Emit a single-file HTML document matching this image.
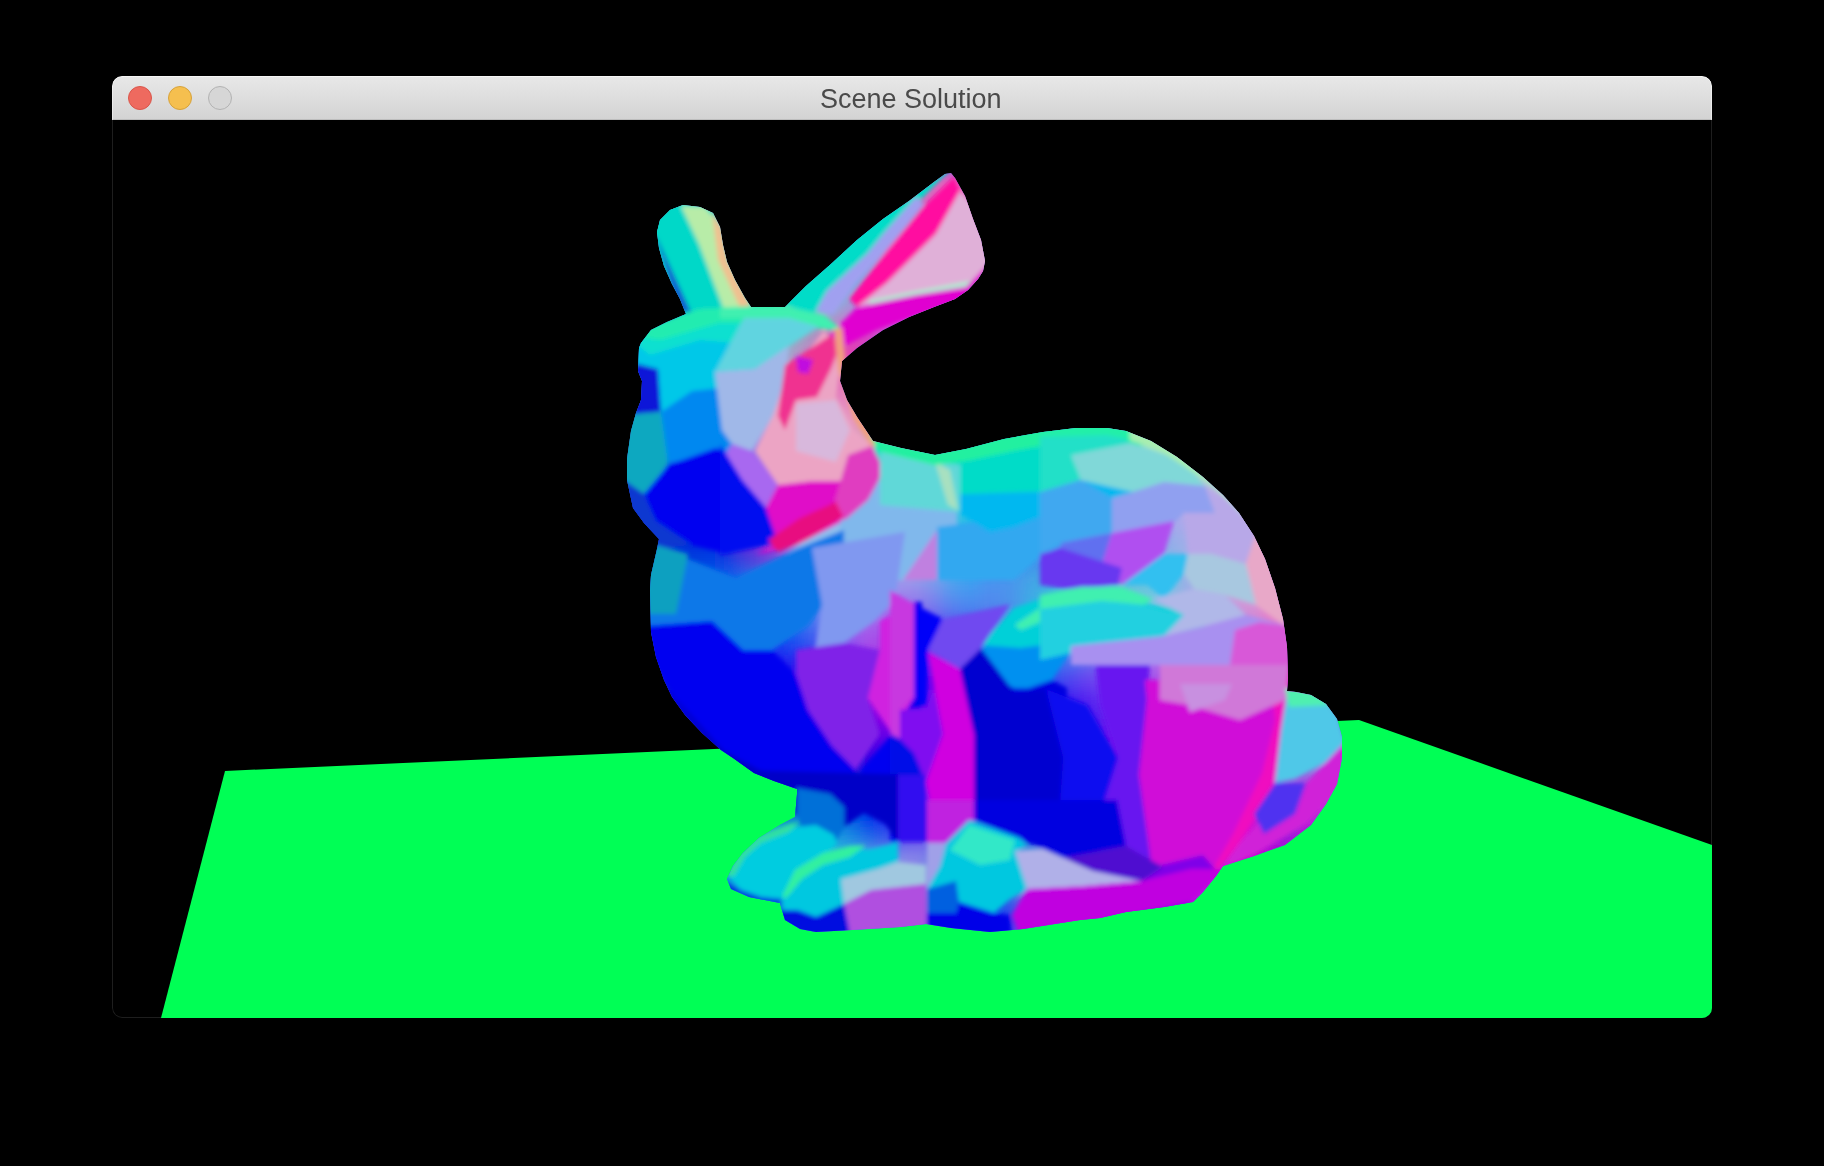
<!DOCTYPE html>
<html><head><meta charset="utf-8">
<style>
html,body{margin:0;padding:0;background:#000;width:1824px;height:1166px;overflow:hidden}
#win{position:absolute;left:112px;top:76px;width:1600px;height:942px;border-radius:10px;overflow:hidden;background:#000}
#title{position:absolute;left:0;top:0;width:1600px;height:44px;background:linear-gradient(#e8e8e8,#d3d3d3);border-radius:10px 10px 0 0;box-shadow:inset 0 1px 0 rgba(255,255,255,.55),inset 1px 0 0 rgba(255,255,255,.45),inset -1px 0 0 rgba(255,255,255,.45),inset 0 -1px 0 #bdbdbd;}
#border{position:absolute;left:0;top:0;width:1600px;height:942px;box-sizing:border-box;border:1px solid #1e1e1e;border-top:none;border-radius:10px;pointer-events:none}
#title .t{position:absolute;left:708px;top:8px;white-space:nowrap;font-family:"Liberation Sans",sans-serif;font-size:27px;color:#4a4a4a;will-change:transform;-webkit-font-smoothing:antialiased}
.dot{position:absolute;top:10px;width:24px;height:24px;border-radius:50%;box-sizing:border-box}
#scene{position:absolute;left:0;top:0}
</style></head><body>
<div id="win">
<div id="border"></div>
<svg id="scene" width="1600" height="942" viewBox="112 76 1600 942">
<polygon fill="#00ff55" points="225,771 1359,720 1712,845 1712,1018 161,1018"/>
<defs><clipPath id="cp"><path d="M657,232 L660,220 L670,210 L683,205 L700,207 L713,213 L720,227 L723,245 L727,262 L735,280 L745,298 L751,307 L785,307 L806,286 L831,264 L857,240 L883,219 L909,201 L934,182 L945,174 L951,173 L955,178 L965,196 L973,219 L981,240 L985,261 L983,271 L978,279 L968,290 L955,299 L934,307 L909,317 L883,330 L857,348 L842,361 L840,381 L847,400 L857,417 L873,441 L901,448 L935,455 L966,449 L1004,439 L1043,432 L1076,428 L1107,428 L1126,431 L1151,441 L1177,457 L1203,477 L1223,495 L1239,513 L1254,536 L1265,559 L1275,588 L1283,619 L1287,647 L1288,678 L1287,691 L1296,692 L1311,695 L1326,704 L1337,719 L1342,737 L1342,758 L1337,784 L1326,804 L1311,825 L1285,845 L1254,856 L1223,866 L1216,876 L1203,892 L1193,902 L1164,907 L1126,912 L1100,918 L1080,920 L1023,929 L990,932 L951,928 L926,924 L900,927 L852,930 L816,932 L800,929 L785,920 L781,907 L780,903 L749,897 L731,889 L727,879 L733,866 L743,853 L759,838 L780,825 L795,817 L797,794 L797,789 L774,781 L754,773 L733,758 L721,750 L702,733 L685,715 L672,697 L664,680 L656,657 L651,632 L650,590 L651,575 L657,549 L659,539 L644,523 L633,508 L627,480 L627,459 L631,431 L636,413 L641,400 L642,381 L638,371 L639,348 L641,343 L651,330 L667,322 L686,314 L680,299 L672,284 L664,266 L659,248 Z"/></clipPath></defs>
<g clip-path="url(#cp)">
<rect x="600" y="160" width="760" height="790" fill="#5a50f0"/>
<defs><filter id="bl" x="600" y="150" width="780" height="820" filterUnits="userSpaceOnUse"><feGaussianBlur stdDeviation="8"/></filter><filter id="bp" x="600" y="150" width="780" height="820" filterUnits="userSpaceOnUse"><feGaussianBlur stdDeviation="2"/></filter></defs>
<g filter="url(#bl)"><rect x="620" y="170" width="20" height="20" fill="#40e0c0"/>
<rect x="640" y="170" width="20" height="20" fill="#40e0c0"/>
<rect x="660" y="170" width="20" height="20" fill="#40e0c0"/>
<rect x="680" y="170" width="20" height="20" fill="#5ee0bc"/>
<rect x="700" y="170" width="20" height="20" fill="#9ae0b4"/>
<rect x="720" y="170" width="20" height="20" fill="#b8e0b0"/>
<rect x="740" y="170" width="20" height="20" fill="#b8e0b0"/>
<rect x="760" y="170" width="20" height="20" fill="#b8e0b0"/>
<rect x="780" y="170" width="20" height="20" fill="#b8e0b0"/>
<rect x="800" y="170" width="20" height="20" fill="#8edeb6"/>
<rect x="820" y="170" width="20" height="20" fill="#3adac2"/>
<rect x="840" y="170" width="20" height="20" fill="#10d8c8"/>
<rect x="860" y="170" width="20" height="20" fill="#10d8c8"/>
<rect x="880" y="170" width="20" height="20" fill="#40bac6"/>
<rect x="900" y="170" width="20" height="20" fill="#a07ec2"/>
<rect x="920" y="170" width="20" height="20" fill="#d860be"/>
<rect x="940" y="170" width="20" height="20" fill="#e860ba"/>
<rect x="960" y="170" width="20" height="20" fill="#f060b8"/>
<rect x="980" y="170" width="20" height="20" fill="#f060b8"/>
<rect x="1000" y="170" width="20" height="20" fill="#f060b8"/>
<rect x="1020" y="170" width="20" height="20" fill="#f060b8"/>
<rect x="1040" y="170" width="20" height="20" fill="#f060b8"/>
<rect x="1060" y="170" width="20" height="20" fill="#f060b8"/>
<rect x="1080" y="170" width="20" height="20" fill="#f060b8"/>
<rect x="1100" y="170" width="20" height="20" fill="#f060b8"/>
<rect x="1120" y="170" width="20" height="20" fill="#f060b8"/>
<rect x="1140" y="170" width="20" height="20" fill="#f060b8"/>
<rect x="1160" y="170" width="20" height="20" fill="#f060b8"/>
<rect x="1180" y="170" width="20" height="20" fill="#f060b8"/>
<rect x="1200" y="170" width="20" height="20" fill="#f060b8"/>
<rect x="1220" y="170" width="20" height="20" fill="#f060b8"/>
<rect x="1240" y="170" width="20" height="20" fill="#de7ebe"/>
<rect x="1260" y="170" width="20" height="20" fill="#babaca"/>
<rect x="1280" y="170" width="20" height="20" fill="#a8d8d0"/>
<rect x="1300" y="170" width="20" height="20" fill="#a8d8d0"/>
<rect x="1320" y="170" width="20" height="20" fill="#a8d8d0"/>
<rect x="620" y="190" width="20" height="20" fill="#40e0c0"/>
<rect x="640" y="190" width="20" height="20" fill="#40e0c0"/>
<rect x="660" y="190" width="20" height="20" fill="#40e0c0"/>
<rect x="680" y="190" width="20" height="20" fill="#5ee0bc"/>
<rect x="700" y="190" width="20" height="20" fill="#9ae0b4"/>
<rect x="720" y="190" width="20" height="20" fill="#b8e0b0"/>
<rect x="740" y="190" width="20" height="20" fill="#b8e0b0"/>
<rect x="760" y="190" width="20" height="20" fill="#acdfb2"/>
<rect x="780" y="190" width="20" height="20" fill="#96ddb8"/>
<rect x="800" y="190" width="20" height="20" fill="#6adabe"/>
<rect x="820" y="190" width="20" height="20" fill="#2cd8c8"/>
<rect x="840" y="190" width="20" height="20" fill="#0dd6cb"/>
<rect x="860" y="190" width="20" height="20" fill="#0fd8c9"/>
<rect x="880" y="190" width="20" height="20" fill="#40bac6"/>
<rect x="900" y="190" width="20" height="20" fill="#a07ec2"/>
<rect x="920" y="190" width="20" height="20" fill="#d862bf"/>
<rect x="940" y="190" width="20" height="20" fill="#e666bd"/>
<rect x="960" y="190" width="20" height="20" fill="#ee68bc"/>
<rect x="980" y="190" width="20" height="20" fill="#ee68bc"/>
<rect x="1000" y="190" width="20" height="20" fill="#ee68bc"/>
<rect x="1020" y="190" width="20" height="20" fill="#ee68bc"/>
<rect x="1040" y="190" width="20" height="20" fill="#ee68bc"/>
<rect x="1060" y="190" width="20" height="20" fill="#ee68bc"/>
<rect x="1080" y="190" width="20" height="20" fill="#ee68bc"/>
<rect x="1100" y="190" width="20" height="20" fill="#ee68bc"/>
<rect x="1120" y="190" width="20" height="20" fill="#ee68bc"/>
<rect x="1140" y="190" width="20" height="20" fill="#ee68bc"/>
<rect x="1160" y="190" width="20" height="20" fill="#ee68bc"/>
<rect x="1180" y="190" width="20" height="20" fill="#ee68bc"/>
<rect x="1200" y="190" width="20" height="20" fill="#ea6ebc"/>
<rect x="1220" y="190" width="20" height="20" fill="#e278be"/>
<rect x="1240" y="190" width="20" height="20" fill="#d094c2"/>
<rect x="1260" y="190" width="20" height="20" fill="#b6c2cc"/>
<rect x="1280" y="190" width="20" height="20" fill="#a8d8d0"/>
<rect x="1300" y="190" width="20" height="20" fill="#a8d8d0"/>
<rect x="1320" y="190" width="20" height="20" fill="#a8d8d0"/>
<rect x="620" y="210" width="20" height="20" fill="#40e0c0"/>
<rect x="640" y="210" width="20" height="20" fill="#40e0c0"/>
<rect x="660" y="210" width="20" height="20" fill="#40e0c0"/>
<rect x="680" y="210" width="20" height="20" fill="#5ee0bc"/>
<rect x="700" y="210" width="20" height="20" fill="#9ae0b4"/>
<rect x="720" y="210" width="20" height="20" fill="#b8e0b0"/>
<rect x="740" y="210" width="20" height="20" fill="#b8e0b0"/>
<rect x="760" y="210" width="20" height="20" fill="#96ddb8"/>
<rect x="780" y="210" width="20" height="20" fill="#50d7c6"/>
<rect x="800" y="210" width="20" height="20" fill="#24d4d0"/>
<rect x="820" y="210" width="20" height="20" fill="#0ed2d2"/>
<rect x="840" y="210" width="20" height="20" fill="#07d4d1"/>
<rect x="860" y="210" width="20" height="20" fill="#0dd6cb"/>
<rect x="880" y="210" width="20" height="20" fill="#40bac6"/>
<rect x="900" y="210" width="20" height="20" fill="#a07ec2"/>
<rect x="920" y="210" width="20" height="20" fill="#d666c1"/>
<rect x="940" y="210" width="20" height="20" fill="#e472c3"/>
<rect x="960" y="210" width="20" height="20" fill="#ea78c4"/>
<rect x="980" y="210" width="20" height="20" fill="#ea78c4"/>
<rect x="1000" y="210" width="20" height="20" fill="#ea78c4"/>
<rect x="1020" y="210" width="20" height="20" fill="#ea78c4"/>
<rect x="1040" y="210" width="20" height="20" fill="#ea78c4"/>
<rect x="1060" y="210" width="20" height="20" fill="#ea78c4"/>
<rect x="1080" y="210" width="20" height="20" fill="#ea78c4"/>
<rect x="1100" y="210" width="20" height="20" fill="#ea78c4"/>
<rect x="1120" y="210" width="20" height="20" fill="#ea78c4"/>
<rect x="1140" y="210" width="20" height="20" fill="#ea78c4"/>
<rect x="1160" y="210" width="20" height="20" fill="#ea78c4"/>
<rect x="1180" y="210" width="20" height="20" fill="#ea78c4"/>
<rect x="1200" y="210" width="20" height="20" fill="#de88c6"/>
<rect x="1220" y="210" width="20" height="20" fill="#c6aac8"/>
<rect x="1240" y="210" width="20" height="20" fill="#b6c2cc"/>
<rect x="1260" y="210" width="20" height="20" fill="#acd0ce"/>
<rect x="1280" y="210" width="20" height="20" fill="#a8d8d0"/>
<rect x="1300" y="210" width="20" height="20" fill="#a8d8d0"/>
<rect x="1320" y="210" width="20" height="20" fill="#a8d8d0"/>
<rect x="620" y="230" width="20" height="20" fill="#34d8c2"/>
<rect x="640" y="230" width="20" height="20" fill="#34d8c2"/>
<rect x="660" y="230" width="20" height="20" fill="#34d8c2"/>
<rect x="680" y="230" width="20" height="20" fill="#54dabd"/>
<rect x="700" y="230" width="20" height="20" fill="#92deb3"/>
<rect x="720" y="230" width="20" height="20" fill="#b2e0ae"/>
<rect x="740" y="230" width="20" height="20" fill="#b2e0ae"/>
<rect x="760" y="230" width="20" height="20" fill="#88deb6"/>
<rect x="780" y="230" width="20" height="20" fill="#36d8c8"/>
<rect x="800" y="230" width="20" height="20" fill="#09d4d2"/>
<rect x="820" y="230" width="20" height="20" fill="#03d2d6"/>
<rect x="840" y="230" width="20" height="20" fill="#0dced6"/>
<rect x="860" y="230" width="20" height="20" fill="#27c8d0"/>
<rect x="880" y="230" width="20" height="20" fill="#5caeca"/>
<rect x="900" y="230" width="20" height="20" fill="#ac7cc4"/>
<rect x="920" y="230" width="20" height="20" fill="#d86ec3"/>
<rect x="940" y="230" width="20" height="20" fill="#de82c9"/>
<rect x="960" y="230" width="20" height="20" fill="#e28ccc"/>
<rect x="980" y="230" width="20" height="20" fill="#e28ccc"/>
<rect x="1000" y="230" width="20" height="20" fill="#e28ccc"/>
<rect x="1020" y="230" width="20" height="20" fill="#e28ccc"/>
<rect x="1040" y="230" width="20" height="20" fill="#e28ccc"/>
<rect x="1060" y="230" width="20" height="20" fill="#e28ccc"/>
<rect x="1080" y="230" width="20" height="20" fill="#e28ccc"/>
<rect x="1100" y="230" width="20" height="20" fill="#e28ccc"/>
<rect x="1120" y="230" width="20" height="20" fill="#e28ccc"/>
<rect x="1140" y="230" width="20" height="20" fill="#e28ccc"/>
<rect x="1160" y="230" width="20" height="20" fill="#e08ecc"/>
<rect x="1180" y="230" width="20" height="20" fill="#da94ca"/>
<rect x="1200" y="230" width="20" height="20" fill="#cca6cc"/>
<rect x="1220" y="230" width="20" height="20" fill="#b4c8ce"/>
<rect x="1240" y="230" width="20" height="20" fill="#a8d8d0"/>
<rect x="1260" y="230" width="20" height="20" fill="#a8d8d0"/>
<rect x="1280" y="230" width="20" height="20" fill="#a8d8d0"/>
<rect x="1300" y="230" width="20" height="20" fill="#a8d8d0"/>
<rect x="1320" y="230" width="20" height="20" fill="#a8d8d0"/>
<rect x="620" y="250" width="20" height="20" fill="#1cc8c6"/>
<rect x="640" y="250" width="20" height="20" fill="#1cc8c6"/>
<rect x="660" y="250" width="20" height="20" fill="#1cc8c6"/>
<rect x="680" y="250" width="20" height="20" fill="#3ecebf"/>
<rect x="700" y="250" width="20" height="20" fill="#84dab1"/>
<rect x="720" y="250" width="20" height="20" fill="#a6e0aa"/>
<rect x="740" y="250" width="20" height="20" fill="#a6e0aa"/>
<rect x="760" y="250" width="20" height="20" fill="#86e0b0"/>
<rect x="780" y="250" width="20" height="20" fill="#44e2ba"/>
<rect x="800" y="250" width="20" height="20" fill="#1bdec6"/>
<rect x="820" y="250" width="20" height="20" fill="#09d4d2"/>
<rect x="840" y="250" width="20" height="20" fill="#1fc4d8"/>
<rect x="860" y="250" width="20" height="20" fill="#5daeda"/>
<rect x="880" y="250" width="20" height="20" fill="#9494d4"/>
<rect x="900" y="250" width="20" height="20" fill="#c47ac6"/>
<rect x="920" y="250" width="20" height="20" fill="#da7ac5"/>
<rect x="940" y="250" width="20" height="20" fill="#d896cf"/>
<rect x="960" y="250" width="20" height="20" fill="#d6a4d4"/>
<rect x="980" y="250" width="20" height="20" fill="#d6a4d4"/>
<rect x="1000" y="250" width="20" height="20" fill="#d6a4d4"/>
<rect x="1020" y="250" width="20" height="20" fill="#d6a4d4"/>
<rect x="1040" y="250" width="20" height="20" fill="#d6a4d4"/>
<rect x="1060" y="250" width="20" height="20" fill="#d6a4d4"/>
<rect x="1080" y="250" width="20" height="20" fill="#d6a4d4"/>
<rect x="1100" y="250" width="20" height="20" fill="#d6a4d4"/>
<rect x="1120" y="250" width="20" height="20" fill="#d6a4d4"/>
<rect x="1140" y="250" width="20" height="20" fill="#d6a4d4"/>
<rect x="1160" y="250" width="20" height="20" fill="#ceacd2"/>
<rect x="1180" y="250" width="20" height="20" fill="#c0bad0"/>
<rect x="1200" y="250" width="20" height="20" fill="#b4c8ce"/>
<rect x="1220" y="250" width="20" height="20" fill="#acd2d0"/>
<rect x="1240" y="250" width="20" height="20" fill="#a8d8d0"/>
<rect x="1260" y="250" width="20" height="20" fill="#a8d8d0"/>
<rect x="1280" y="250" width="20" height="20" fill="#a8d8d0"/>
<rect x="1300" y="250" width="20" height="20" fill="#a8d8d0"/>
<rect x="1320" y="250" width="20" height="20" fill="#a8d8d0"/>
<rect x="620" y="270" width="20" height="20" fill="#10c0c6"/>
<rect x="640" y="270" width="20" height="20" fill="#10bec6"/>
<rect x="660" y="270" width="20" height="20" fill="#10bac6"/>
<rect x="680" y="270" width="20" height="20" fill="#2fc2bf"/>
<rect x="700" y="270" width="20" height="20" fill="#6dd6b1"/>
<rect x="720" y="270" width="20" height="20" fill="#8be1a9"/>
<rect x="740" y="270" width="20" height="20" fill="#89e3a7"/>
<rect x="760" y="270" width="20" height="20" fill="#72e5aa"/>
<rect x="780" y="270" width="20" height="20" fill="#46e7b4"/>
<rect x="800" y="270" width="20" height="20" fill="#2fdfc0"/>
<rect x="820" y="270" width="20" height="20" fill="#2dcdd2"/>
<rect x="840" y="270" width="20" height="20" fill="#4cb5da"/>
<rect x="860" y="270" width="20" height="20" fill="#8c97dc"/>
<rect x="880" y="270" width="20" height="20" fill="#b685d6"/>
<rect x="900" y="270" width="20" height="20" fill="#ca7fcc"/>
<rect x="920" y="270" width="20" height="20" fill="#d383ca"/>
<rect x="940" y="270" width="20" height="20" fill="#d191d2"/>
<rect x="960" y="270" width="20" height="20" fill="#d098d6"/>
<rect x="980" y="270" width="20" height="20" fill="#d098d6"/>
<rect x="1000" y="270" width="20" height="20" fill="#d098d6"/>
<rect x="1020" y="270" width="20" height="20" fill="#d098d6"/>
<rect x="1040" y="270" width="20" height="20" fill="#d098d6"/>
<rect x="1060" y="270" width="20" height="20" fill="#d098d6"/>
<rect x="1080" y="270" width="20" height="20" fill="#d098d6"/>
<rect x="1100" y="270" width="20" height="20" fill="#d098d6"/>
<rect x="1120" y="270" width="20" height="20" fill="#cea1d6"/>
<rect x="1140" y="270" width="20" height="20" fill="#c8b3d4"/>
<rect x="1160" y="270" width="20" height="20" fill="#bec3d3"/>
<rect x="1180" y="270" width="20" height="20" fill="#b0d1d1"/>
<rect x="1200" y="270" width="20" height="20" fill="#a8d8d0"/>
<rect x="1220" y="270" width="20" height="20" fill="#a8d8d0"/>
<rect x="1240" y="270" width="20" height="20" fill="#a8d8d0"/>
<rect x="1260" y="270" width="20" height="20" fill="#a8d8d0"/>
<rect x="1280" y="270" width="20" height="20" fill="#a8d8d0"/>
<rect x="1300" y="270" width="20" height="20" fill="#a8d8d0"/>
<rect x="1320" y="270" width="20" height="20" fill="#a8d8d0"/>
<rect x="620" y="290" width="20" height="20" fill="#10c0c2"/>
<rect x="640" y="290" width="20" height="20" fill="#10bac2"/>
<rect x="660" y="290" width="20" height="20" fill="#10aec2"/>
<rect x="680" y="290" width="20" height="20" fill="#25b6bd"/>
<rect x="700" y="290" width="20" height="20" fill="#4fd2b3"/>
<rect x="720" y="290" width="20" height="20" fill="#61e3ab"/>
<rect x="740" y="290" width="20" height="20" fill="#5be9a5"/>
<rect x="760" y="290" width="20" height="20" fill="#4eeba8"/>
<rect x="780" y="290" width="20" height="20" fill="#3ae9b2"/>
<rect x="800" y="290" width="20" height="20" fill="#45d9c2"/>
<rect x="820" y="290" width="20" height="20" fill="#6fbbd4"/>
<rect x="840" y="290" width="20" height="20" fill="#949fdc"/>
<rect x="860" y="290" width="20" height="20" fill="#b485d6"/>
<rect x="880" y="290" width="20" height="20" fill="#c27fd4"/>
<rect x="900" y="290" width="20" height="20" fill="#be8dd2"/>
<rect x="920" y="290" width="20" height="20" fill="#c189d2"/>
<rect x="940" y="290" width="20" height="20" fill="#cb73d2"/>
<rect x="960" y="290" width="20" height="20" fill="#d068d2"/>
<rect x="980" y="290" width="20" height="20" fill="#d068d2"/>
<rect x="1000" y="290" width="20" height="20" fill="#d068d2"/>
<rect x="1020" y="290" width="20" height="20" fill="#d068d2"/>
<rect x="1040" y="290" width="20" height="20" fill="#d068d2"/>
<rect x="1060" y="290" width="20" height="20" fill="#d068d2"/>
<rect x="1080" y="290" width="20" height="20" fill="#d068d2"/>
<rect x="1100" y="290" width="20" height="20" fill="#d068d2"/>
<rect x="1120" y="290" width="20" height="20" fill="#c883d0"/>
<rect x="1140" y="290" width="20" height="20" fill="#bab9ce"/>
<rect x="1160" y="290" width="20" height="20" fill="#b0d5cd"/>
<rect x="1180" y="290" width="20" height="20" fill="#aad7cf"/>
<rect x="1200" y="290" width="20" height="20" fill="#a8d8d0"/>
<rect x="1220" y="290" width="20" height="20" fill="#a8d8d0"/>
<rect x="1240" y="290" width="20" height="20" fill="#a8d8d0"/>
<rect x="1260" y="290" width="20" height="20" fill="#a8d8d0"/>
<rect x="1280" y="290" width="20" height="20" fill="#a8d8d0"/>
<rect x="1300" y="290" width="20" height="20" fill="#a8d8d0"/>
<rect x="1320" y="290" width="20" height="20" fill="#a8d8d0"/>
<rect x="620" y="310" width="20" height="20" fill="#10c0c0"/>
<rect x="640" y="310" width="20" height="20" fill="#10bbc1"/>
<rect x="660" y="310" width="20" height="20" fill="#10b1c3"/>
<rect x="680" y="310" width="20" height="20" fill="#1cb8c2"/>
<rect x="700" y="310" width="20" height="20" fill="#34d0bc"/>
<rect x="720" y="310" width="20" height="20" fill="#40e0b6"/>
<rect x="740" y="310" width="20" height="20" fill="#40e6b0"/>
<rect x="760" y="310" width="20" height="20" fill="#45e4b0"/>
<rect x="780" y="310" width="20" height="20" fill="#4fd8ba"/>
<rect x="800" y="310" width="20" height="20" fill="#6fbec2"/>
<rect x="820" y="310" width="20" height="20" fill="#a598cc"/>
<rect x="840" y="310" width="20" height="20" fill="#c47ad0"/>
<rect x="860" y="310" width="20" height="20" fill="#cc66ce"/>
<rect x="880" y="310" width="20" height="20" fill="#ca65d0"/>
<rect x="900" y="310" width="20" height="20" fill="#be77d2"/>
<rect x="920" y="310" width="20" height="20" fill="#be74d3"/>
<rect x="940" y="310" width="20" height="20" fill="#ca5cd1"/>
<rect x="960" y="310" width="20" height="20" fill="#d050d0"/>
<rect x="980" y="310" width="20" height="20" fill="#d050d0"/>
<rect x="1000" y="310" width="20" height="20" fill="#d050d0"/>
<rect x="1020" y="310" width="20" height="20" fill="#d050d0"/>
<rect x="1040" y="310" width="20" height="20" fill="#c759d0"/>
<rect x="1060" y="310" width="20" height="20" fill="#b56bd0"/>
<rect x="1080" y="310" width="20" height="20" fill="#b074d0"/>
<rect x="1100" y="310" width="20" height="20" fill="#b872d2"/>
<rect x="1120" y="310" width="20" height="20" fill="#b78ed0"/>
<rect x="1140" y="310" width="20" height="20" fill="#adc4ca"/>
<rect x="1160" y="310" width="20" height="20" fill="#a8deca"/>
<rect x="1180" y="310" width="20" height="20" fill="#a8dace"/>
<rect x="1200" y="310" width="20" height="20" fill="#a8d8d0"/>
<rect x="1220" y="310" width="20" height="20" fill="#a8d8d0"/>
<rect x="1240" y="310" width="20" height="20" fill="#a8d8d0"/>
<rect x="1260" y="310" width="20" height="20" fill="#a8d8d0"/>
<rect x="1280" y="310" width="20" height="20" fill="#a8d8d0"/>
<rect x="1300" y="310" width="20" height="20" fill="#a8d8d0"/>
<rect x="1320" y="310" width="20" height="20" fill="#a8d8d0"/>
<rect x="620" y="330" width="20" height="20" fill="#10c0c0"/>
<rect x="640" y="330" width="20" height="20" fill="#10c1c3"/>
<rect x="660" y="330" width="20" height="20" fill="#10c3c9"/>
<rect x="680" y="330" width="20" height="20" fill="#14c8cc"/>
<rect x="700" y="330" width="20" height="20" fill="#1cd0ce"/>
<rect x="720" y="330" width="20" height="20" fill="#28d6cc"/>
<rect x="740" y="330" width="20" height="20" fill="#38dcc6"/>
<rect x="760" y="330" width="20" height="20" fill="#57d0c6"/>
<rect x="780" y="330" width="20" height="20" fill="#85b4c8"/>
<rect x="800" y="330" width="20" height="20" fill="#ad90c4"/>
<rect x="820" y="330" width="20" height="20" fill="#cf62b6"/>
<rect x="840" y="330" width="20" height="20" fill="#dc46b6"/>
<rect x="860" y="330" width="20" height="20" fill="#d43ac4"/>
<rect x="880" y="330" width="20" height="20" fill="#ce37ca"/>
<rect x="900" y="330" width="20" height="20" fill="#ca3dcc"/>
<rect x="920" y="330" width="20" height="20" fill="#ca44cd"/>
<rect x="940" y="330" width="20" height="20" fill="#ce4ccf"/>
<rect x="960" y="330" width="20" height="20" fill="#d050d0"/>
<rect x="980" y="330" width="20" height="20" fill="#d050d0"/>
<rect x="1000" y="330" width="20" height="20" fill="#d050d0"/>
<rect x="1020" y="330" width="20" height="20" fill="#d050d0"/>
<rect x="1040" y="330" width="20" height="20" fill="#b56bd0"/>
<rect x="1060" y="330" width="20" height="20" fill="#7fa1d0"/>
<rect x="1080" y="330" width="20" height="20" fill="#70bad2"/>
<rect x="1100" y="330" width="20" height="20" fill="#88b8d4"/>
<rect x="1120" y="330" width="20" height="20" fill="#99c0d2"/>
<rect x="1140" y="330" width="20" height="20" fill="#a3d6cc"/>
<rect x="1160" y="330" width="20" height="20" fill="#a8deca"/>
<rect x="1180" y="330" width="20" height="20" fill="#a8dace"/>
<rect x="1200" y="330" width="20" height="20" fill="#a8d8d0"/>
<rect x="1220" y="330" width="20" height="20" fill="#a8d8d0"/>
<rect x="1240" y="330" width="20" height="20" fill="#a8d8d0"/>
<rect x="1260" y="330" width="20" height="20" fill="#a8d8d0"/>
<rect x="1280" y="330" width="20" height="20" fill="#a8d8d0"/>
<rect x="1300" y="330" width="20" height="20" fill="#a8d8d0"/>
<rect x="1320" y="330" width="20" height="20" fill="#a8d8d0"/>
<rect x="620" y="350" width="20" height="20" fill="#0e98c4"/>
<rect x="640" y="350" width="20" height="20" fill="#0ea3c8"/>
<rect x="660" y="350" width="20" height="20" fill="#0cb9d0"/>
<rect x="680" y="350" width="20" height="20" fill="#0cc6d6"/>
<rect x="700" y="350" width="20" height="20" fill="#0ccada"/>
<rect x="720" y="350" width="20" height="20" fill="#1fceda"/>
<rect x="740" y="350" width="20" height="20" fill="#45d0d8"/>
<rect x="760" y="350" width="20" height="20" fill="#75bed2"/>
<rect x="780" y="350" width="20" height="20" fill="#af98cc"/>
<rect x="800" y="350" width="20" height="20" fill="#d474c0"/>
<rect x="820" y="350" width="20" height="20" fill="#e454b0"/>
<rect x="840" y="350" width="20" height="20" fill="#e641b0"/>
<rect x="860" y="350" width="20" height="20" fill="#da3bbe"/>
<rect x="880" y="350" width="20" height="20" fill="#d332c6"/>
<rect x="900" y="350" width="20" height="20" fill="#d126c8"/>
<rect x="920" y="350" width="20" height="20" fill="#d02cca"/>
<rect x="940" y="350" width="20" height="20" fill="#d044ce"/>
<rect x="960" y="350" width="20" height="20" fill="#c45acf"/>
<rect x="980" y="350" width="20" height="20" fill="#ac6ccd"/>
<rect x="1000" y="350" width="20" height="20" fill="#a076cc"/>
<rect x="1020" y="350" width="20" height="20" fill="#a076cc"/>
<rect x="1040" y="350" width="20" height="20" fill="#8890cd"/>
<rect x="1060" y="350" width="20" height="20" fill="#58c6cf"/>
<rect x="1080" y="350" width="20" height="20" fill="#50ded2"/>
<rect x="1100" y="350" width="20" height="20" fill="#70dad6"/>
<rect x="1120" y="350" width="20" height="20" fill="#8adad4"/>
<rect x="1140" y="350" width="20" height="20" fill="#9edecc"/>
<rect x="1160" y="350" width="20" height="20" fill="#a8deca"/>
<rect x="1180" y="350" width="20" height="20" fill="#a8dace"/>
<rect x="1200" y="350" width="20" height="20" fill="#a8d8d0"/>
<rect x="1220" y="350" width="20" height="20" fill="#a8d8d0"/>
<rect x="1240" y="350" width="20" height="20" fill="#a8d8d0"/>
<rect x="1260" y="350" width="20" height="20" fill="#a8d8d0"/>
<rect x="1280" y="350" width="20" height="20" fill="#a8d8d0"/>
<rect x="1300" y="350" width="20" height="20" fill="#a8d8d0"/>
<rect x="1320" y="350" width="20" height="20" fill="#a8d8d0"/>
<rect x="620" y="370" width="20" height="20" fill="#0a48cc"/>
<rect x="640" y="370" width="20" height="20" fill="#0861d0"/>
<rect x="660" y="370" width="20" height="20" fill="#0693d8"/>
<rect x="680" y="370" width="20" height="20" fill="#04b2de"/>
<rect x="700" y="370" width="20" height="20" fill="#04bee2"/>
<rect x="720" y="370" width="20" height="20" fill="#25c4e4"/>
<rect x="740" y="370" width="20" height="20" fill="#67c6e2"/>
<rect x="760" y="370" width="20" height="20" fill="#9fb0d8"/>
<rect x="780" y="370" width="20" height="20" fill="#cd82c2"/>
<rect x="800" y="370" width="20" height="20" fill="#e46cb8"/>
<rect x="820" y="370" width="20" height="20" fill="#e46cb8"/>
<rect x="840" y="370" width="20" height="20" fill="#e26bba"/>
<rect x="860" y="370" width="20" height="20" fill="#de69c0"/>
<rect x="880" y="370" width="20" height="20" fill="#d956c4"/>
<rect x="900" y="370" width="20" height="20" fill="#d332c6"/>
<rect x="920" y="370" width="20" height="20" fill="#d02cca"/>
<rect x="940" y="370" width="20" height="20" fill="#d044ce"/>
<rect x="960" y="370" width="20" height="20" fill="#ac6ccd"/>
<rect x="980" y="370" width="20" height="20" fill="#64a6c7"/>
<rect x="1000" y="370" width="20" height="20" fill="#40c2c4"/>
<rect x="1020" y="370" width="20" height="20" fill="#40c2c4"/>
<rect x="1040" y="370" width="20" height="20" fill="#40cac7"/>
<rect x="1060" y="370" width="20" height="20" fill="#40d8cd"/>
<rect x="1080" y="370" width="20" height="20" fill="#50ded2"/>
<rect x="1100" y="370" width="20" height="20" fill="#70dad6"/>
<rect x="1120" y="370" width="20" height="20" fill="#8adad4"/>
<rect x="1140" y="370" width="20" height="20" fill="#9edecc"/>
<rect x="1160" y="370" width="20" height="20" fill="#a8deca"/>
<rect x="1180" y="370" width="20" height="20" fill="#a8dace"/>
<rect x="1200" y="370" width="20" height="20" fill="#a8d8d0"/>
<rect x="1220" y="370" width="20" height="20" fill="#a8d8d0"/>
<rect x="1240" y="370" width="20" height="20" fill="#a8d8d0"/>
<rect x="1260" y="370" width="20" height="20" fill="#a8d8d0"/>
<rect x="1280" y="370" width="20" height="20" fill="#a8d8d0"/>
<rect x="1300" y="370" width="20" height="20" fill="#a8d8d0"/>
<rect x="1320" y="370" width="20" height="20" fill="#a8d8d0"/>
<rect x="620" y="390" width="20" height="20" fill="#0a40ca"/>
<rect x="640" y="390" width="20" height="20" fill="#0856d0"/>
<rect x="660" y="390" width="20" height="20" fill="#0284da"/>
<rect x="680" y="390" width="20" height="20" fill="#01a1e2"/>
<rect x="700" y="390" width="20" height="20" fill="#03afe6"/>
<rect x="720" y="390" width="20" height="20" fill="#2db6e8"/>
<rect x="740" y="390" width="20" height="20" fill="#7fb4e6"/>
<rect x="760" y="390" width="20" height="20" fill="#baa2da"/>
<rect x="780" y="390" width="20" height="20" fill="#dc80c0"/>
<rect x="800" y="390" width="20" height="20" fill="#eb74b7"/>
<rect x="820" y="390" width="20" height="20" fill="#e582bd"/>
<rect x="840" y="390" width="20" height="20" fill="#e288c0"/>
<rect x="860" y="390" width="20" height="20" fill="#e288c0"/>
<rect x="880" y="390" width="20" height="20" fill="#d67ac2"/>
<rect x="900" y="390" width="20" height="20" fill="#c05ec4"/>
<rect x="920" y="390" width="20" height="20" fill="#b05ac7"/>
<rect x="940" y="390" width="20" height="20" fill="#a86cc9"/>
<rect x="960" y="390" width="20" height="20" fill="#7f92c8"/>
<rect x="980" y="390" width="20" height="20" fill="#35ccc2"/>
<rect x="1000" y="390" width="20" height="20" fill="#10e8c0"/>
<rect x="1020" y="390" width="20" height="20" fill="#10e8c0"/>
<rect x="1040" y="390" width="20" height="20" fill="#1ce6c4"/>
<rect x="1060" y="390" width="20" height="20" fill="#34e2cc"/>
<rect x="1080" y="390" width="20" height="20" fill="#50ded2"/>
<rect x="1100" y="390" width="20" height="20" fill="#70dad6"/>
<rect x="1120" y="390" width="20" height="20" fill="#8adad4"/>
<rect x="1140" y="390" width="20" height="20" fill="#9edecc"/>
<rect x="1160" y="390" width="20" height="20" fill="#a8deca"/>
<rect x="1180" y="390" width="20" height="20" fill="#a8dace"/>
<rect x="1200" y="390" width="20" height="20" fill="#a8d8d0"/>
<rect x="1220" y="390" width="20" height="20" fill="#a8d8d0"/>
<rect x="1240" y="390" width="20" height="20" fill="#a8d8d0"/>
<rect x="1260" y="390" width="20" height="20" fill="#a8d8d0"/>
<rect x="1280" y="390" width="20" height="20" fill="#aad6d0"/>
<rect x="1300" y="390" width="20" height="20" fill="#b0d0d2"/>
<rect x="1320" y="390" width="20" height="20" fill="#b2ced2"/>
<rect x="620" y="410" width="20" height="20" fill="#0e80be"/>
<rect x="640" y="410" width="20" height="20" fill="#0a84c6"/>
<rect x="660" y="410" width="20" height="20" fill="#048ad8"/>
<rect x="680" y="410" width="20" height="20" fill="#0393e2"/>
<rect x="700" y="410" width="20" height="20" fill="#099de6"/>
<rect x="720" y="410" width="20" height="20" fill="#37a0e6"/>
<rect x="740" y="410" width="20" height="20" fill="#8d9ee4"/>
<rect x="760" y="410" width="20" height="20" fill="#c498d8"/>
<rect x="780" y="410" width="20" height="20" fill="#de8ec6"/>
<rect x="800" y="410" width="20" height="20" fill="#e98ebd"/>
<rect x="820" y="410" width="20" height="20" fill="#e794bf"/>
<rect x="840" y="410" width="20" height="20" fill="#e698c0"/>
<rect x="860" y="410" width="20" height="20" fill="#e698c0"/>
<rect x="880" y="410" width="20" height="20" fill="#cc9ec0"/>
<rect x="900" y="410" width="20" height="20" fill="#96aac2"/>
<rect x="920" y="410" width="20" height="20" fill="#70b4c1"/>
<rect x="940" y="410" width="20" height="20" fill="#58bebf"/>
<rect x="960" y="410" width="20" height="20" fill="#3dccbe"/>
<rect x="980" y="410" width="20" height="20" fill="#1fdec0"/>
<rect x="1000" y="410" width="20" height="20" fill="#10e8c0"/>
<rect x="1020" y="410" width="20" height="20" fill="#10e8c0"/>
<rect x="1040" y="410" width="20" height="20" fill="#1ce6c4"/>
<rect x="1060" y="410" width="20" height="20" fill="#34e2cc"/>
<rect x="1080" y="410" width="20" height="20" fill="#50ded2"/>
<rect x="1100" y="410" width="20" height="20" fill="#70dad6"/>
<rect x="1120" y="410" width="20" height="20" fill="#8adad4"/>
<rect x="1140" y="410" width="20" height="20" fill="#9edecc"/>
<rect x="1160" y="410" width="20" height="20" fill="#a8deca"/>
<rect x="1180" y="410" width="20" height="20" fill="#a8dace"/>
<rect x="1200" y="410" width="20" height="20" fill="#a8d8d0"/>
<rect x="1220" y="410" width="20" height="20" fill="#a8d8d0"/>
<rect x="1240" y="410" width="20" height="20" fill="#a8d8d0"/>
<rect x="1260" y="410" width="20" height="20" fill="#a8d8d0"/>
<rect x="1280" y="410" width="20" height="20" fill="#b0d0d2"/>
<rect x="1300" y="410" width="20" height="20" fill="#bec2d4"/>
<rect x="1320" y="410" width="20" height="20" fill="#c6bad6"/>
<rect x="620" y="430" width="20" height="20" fill="#1094be"/>
<rect x="640" y="430" width="20" height="20" fill="#0c8cc8"/>
<rect x="660" y="430" width="20" height="20" fill="#067eda"/>
<rect x="680" y="430" width="20" height="20" fill="#0676e6"/>
<rect x="700" y="430" width="20" height="20" fill="#1076e8"/>
<rect x="720" y="430" width="20" height="20" fill="#3d7ae8"/>
<rect x="740" y="430" width="20" height="20" fill="#8f84e6"/>
<rect x="760" y="430" width="20" height="20" fill="#c48ada"/>
<rect x="780" y="430" width="20" height="20" fill="#de90c6"/>
<rect x="800" y="430" width="20" height="20" fill="#ea90bc"/>
<rect x="820" y="430" width="20" height="20" fill="#ea8ebe"/>
<rect x="840" y="430" width="20" height="20" fill="#e095be"/>
<rect x="860" y="430" width="20" height="20" fill="#cca7c0"/>
<rect x="880" y="430" width="20" height="20" fill="#aabcc0"/>
<rect x="900" y="430" width="20" height="20" fill="#78d4c0"/>
<rect x="920" y="430" width="20" height="20" fill="#50e2be"/>
<rect x="940" y="430" width="20" height="20" fill="#30e6ba"/>
<rect x="960" y="430" width="20" height="20" fill="#1ce8ba"/>
<rect x="980" y="430" width="20" height="20" fill="#14e8be"/>
<rect x="1000" y="430" width="20" height="20" fill="#10e8c0"/>
<rect x="1020" y="430" width="20" height="20" fill="#10e8c0"/>
<rect x="1040" y="430" width="20" height="20" fill="#1ce6c4"/>
<rect x="1060" y="430" width="20" height="20" fill="#34e2cc"/>
<rect x="1080" y="430" width="20" height="20" fill="#50ded2"/>
<rect x="1100" y="430" width="20" height="20" fill="#70dad6"/>
<rect x="1120" y="430" width="20" height="20" fill="#8adad4"/>
<rect x="1140" y="430" width="20" height="20" fill="#9edecc"/>
<rect x="1160" y="430" width="20" height="20" fill="#a8deca"/>
<rect x="1180" y="430" width="20" height="20" fill="#a8dace"/>
<rect x="1200" y="430" width="20" height="20" fill="#a8d8d0"/>
<rect x="1220" y="430" width="20" height="20" fill="#a8d8d0"/>
<rect x="1240" y="430" width="20" height="20" fill="#aad6d0"/>
<rect x="1260" y="430" width="20" height="20" fill="#b0d0d2"/>
<rect x="1280" y="430" width="20" height="20" fill="#bac6d4"/>
<rect x="1300" y="430" width="20" height="20" fill="#c8b8d6"/>
<rect x="1320" y="430" width="20" height="20" fill="#d0b0d8"/>
<rect x="620" y="450" width="20" height="20" fill="#107cca"/>
<rect x="640" y="450" width="20" height="20" fill="#0e72d2"/>
<rect x="660" y="450" width="20" height="20" fill="#085ce4"/>
<rect x="680" y="450" width="20" height="20" fill="#0c4aec"/>
<rect x="700" y="450" width="20" height="20" fill="#163aee"/>
<rect x="720" y="450" width="20" height="20" fill="#3f44ee"/>
<rect x="740" y="450" width="20" height="20" fill="#8566ec"/>
<rect x="760" y="450" width="20" height="20" fill="#ba7cde"/>
<rect x="780" y="450" width="20" height="20" fill="#dc82c2"/>
<rect x="800" y="450" width="20" height="20" fill="#ee7eb6"/>
<rect x="820" y="450" width="20" height="20" fill="#ee6cb8"/>
<rect x="840" y="450" width="20" height="20" fill="#d07fbc"/>
<rect x="860" y="450" width="20" height="20" fill="#94b5be"/>
<rect x="880" y="450" width="20" height="20" fill="#70d4c0"/>
<rect x="900" y="450" width="20" height="20" fill="#66dcc0"/>
<rect x="920" y="450" width="20" height="20" fill="#50e2be"/>
<rect x="940" y="450" width="20" height="20" fill="#30e6ba"/>
<rect x="960" y="450" width="20" height="20" fill="#1ce8ba"/>
<rect x="980" y="450" width="20" height="20" fill="#14e8be"/>
<rect x="1000" y="450" width="20" height="20" fill="#10e8c0"/>
<rect x="1020" y="450" width="20" height="20" fill="#10e8c0"/>
<rect x="1040" y="450" width="20" height="20" fill="#1ce6c4"/>
<rect x="1060" y="450" width="20" height="20" fill="#34e2cc"/>
<rect x="1080" y="450" width="20" height="20" fill="#50ded2"/>
<rect x="1100" y="450" width="20" height="20" fill="#70dad6"/>
<rect x="1120" y="450" width="20" height="20" fill="#8adad4"/>
<rect x="1140" y="450" width="20" height="20" fill="#9edecc"/>
<rect x="1160" y="450" width="20" height="20" fill="#a8deca"/>
<rect x="1180" y="450" width="20" height="20" fill="#a8dace"/>
<rect x="1200" y="450" width="20" height="20" fill="#a8d8d0"/>
<rect x="1220" y="450" width="20" height="20" fill="#a8d8d0"/>
<rect x="1240" y="450" width="20" height="20" fill="#b0d0d2"/>
<rect x="1260" y="450" width="20" height="20" fill="#bec2d4"/>
<rect x="1280" y="450" width="20" height="20" fill="#c8b8d6"/>
<rect x="1300" y="450" width="20" height="20" fill="#ceb2d8"/>
<rect x="1320" y="450" width="20" height="20" fill="#d0b0d8"/>
<rect x="620" y="470" width="20" height="20" fill="#0c5cd0"/>
<rect x="640" y="470" width="20" height="20" fill="#0a51d8"/>
<rect x="660" y="470" width="20" height="20" fill="#083be8"/>
<rect x="680" y="470" width="20" height="20" fill="#0c27f0"/>
<rect x="700" y="470" width="20" height="20" fill="#1a15f0"/>
<rect x="720" y="470" width="20" height="20" fill="#401ff0"/>
<rect x="740" y="470" width="20" height="20" fill="#8045f0"/>
<rect x="760" y="470" width="20" height="20" fill="#b45ce0"/>
<rect x="780" y="470" width="20" height="20" fill="#da62c0"/>
<rect x="800" y="470" width="20" height="20" fill="#ec60b4"/>
<rect x="820" y="470" width="20" height="20" fill="#e652ba"/>
<rect x="840" y="470" width="20" height="20" fill="#bf70c0"/>
<rect x="860" y="470" width="20" height="20" fill="#75b8c6"/>
<rect x="880" y="470" width="20" height="20" fill="#56dcc8"/>
<rect x="900" y="470" width="20" height="20" fill="#62daca"/>
<rect x="920" y="470" width="20" height="20" fill="#57dcc8"/>
<rect x="940" y="470" width="20" height="20" fill="#35dec4"/>
<rect x="960" y="470" width="20" height="20" fill="#1edfc4"/>
<rect x="980" y="470" width="20" height="20" fill="#12ddca"/>
<rect x="1000" y="470" width="20" height="20" fill="#0ddccc"/>
<rect x="1020" y="470" width="20" height="20" fill="#0fdccc"/>
<rect x="1040" y="470" width="20" height="20" fill="#1edacf"/>
<rect x="1060" y="470" width="20" height="20" fill="#3ad6d5"/>
<rect x="1080" y="470" width="20" height="20" fill="#57d2d9"/>
<rect x="1100" y="470" width="20" height="20" fill="#75d0db"/>
<rect x="1120" y="470" width="20" height="20" fill="#8eceda"/>
<rect x="1140" y="470" width="20" height="20" fill="#a0d0d4"/>
<rect x="1160" y="470" width="20" height="20" fill="#aacfd3"/>
<rect x="1180" y="470" width="20" height="20" fill="#accdd5"/>
<rect x="1200" y="470" width="20" height="20" fill="#aeccd5"/>
<rect x="1220" y="470" width="20" height="20" fill="#b0ced3"/>
<rect x="1240" y="470" width="20" height="20" fill="#bac6d4"/>
<rect x="1260" y="470" width="20" height="20" fill="#c8b8d6"/>
<rect x="1280" y="470" width="20" height="20" fill="#d2afd6"/>
<rect x="1300" y="470" width="20" height="20" fill="#d4add4"/>
<rect x="1320" y="470" width="20" height="20" fill="#d6acd2"/>
<rect x="620" y="490" width="20" height="20" fill="#0434d0"/>
<rect x="640" y="490" width="20" height="20" fill="#042bd8"/>
<rect x="660" y="490" width="20" height="20" fill="#0219e8"/>
<rect x="680" y="490" width="20" height="20" fill="#0a0df0"/>
<rect x="700" y="490" width="20" height="20" fill="#1807f0"/>
<rect x="720" y="490" width="20" height="20" fill="#400df0"/>
<rect x="740" y="490" width="20" height="20" fill="#801ff0"/>
<rect x="760" y="490" width="20" height="20" fill="#b22ae0"/>
<rect x="780" y="490" width="20" height="20" fill="#d830c0"/>
<rect x="800" y="490" width="20" height="20" fill="#e236b6"/>
<rect x="820" y="490" width="20" height="20" fill="#d440c4"/>
<rect x="840" y="490" width="20" height="20" fill="#ad68ce"/>
<rect x="860" y="490" width="20" height="20" fill="#6fb0d4"/>
<rect x="880" y="490" width="20" height="20" fill="#5ad2da"/>
<rect x="900" y="490" width="20" height="20" fill="#6ed0dc"/>
<rect x="920" y="490" width="20" height="20" fill="#65cedc"/>
<rect x="940" y="490" width="20" height="20" fill="#3fd0d8"/>
<rect x="960" y="490" width="20" height="20" fill="#22cdda"/>
<rect x="980" y="490" width="20" height="20" fill="#0ec7e0"/>
<rect x="1000" y="490" width="20" height="20" fill="#07c4e4"/>
<rect x="1020" y="490" width="20" height="20" fill="#0dc4e4"/>
<rect x="1040" y="490" width="20" height="20" fill="#22c2e5"/>
<rect x="1060" y="490" width="20" height="20" fill="#46bee7"/>
<rect x="1080" y="490" width="20" height="20" fill="#65bce7"/>
<rect x="1100" y="490" width="20" height="20" fill="#7fbae5"/>
<rect x="1120" y="490" width="20" height="20" fill="#94b8e4"/>
<rect x="1140" y="490" width="20" height="20" fill="#a6b2e6"/>
<rect x="1160" y="490" width="20" height="20" fill="#b0b1e5"/>
<rect x="1180" y="490" width="20" height="20" fill="#b2b3e3"/>
<rect x="1200" y="490" width="20" height="20" fill="#b8b6df"/>
<rect x="1220" y="490" width="20" height="20" fill="#c2b8d9"/>
<rect x="1240" y="490" width="20" height="20" fill="#c8b8d6"/>
<rect x="1260" y="490" width="20" height="20" fill="#ceb2d8"/>
<rect x="1280" y="490" width="20" height="20" fill="#d4add4"/>
<rect x="1300" y="490" width="20" height="20" fill="#dea7ca"/>
<rect x="1320" y="490" width="20" height="20" fill="#e2a4c6"/>
<rect x="620" y="510" width="20" height="20" fill="#002cce"/>
<rect x="640" y="510" width="20" height="20" fill="#0024d5"/>
<rect x="660" y="510" width="20" height="20" fill="#0014e3"/>
<rect x="680" y="510" width="20" height="20" fill="#060cea"/>
<rect x="700" y="510" width="20" height="20" fill="#120cec"/>
<rect x="720" y="510" width="20" height="20" fill="#380eeb"/>
<rect x="740" y="510" width="20" height="20" fill="#7812e9"/>
<rect x="760" y="510" width="20" height="20" fill="#a81add"/>
<rect x="780" y="510" width="20" height="20" fill="#c624c7"/>
<rect x="800" y="510" width="20" height="20" fill="#ce36c3"/>
<rect x="820" y="510" width="20" height="20" fill="#bc50d1"/>
<rect x="840" y="510" width="20" height="20" fill="#9e78da"/>
<rect x="860" y="510" width="20" height="20" fill="#72b0e0"/>
<rect x="880" y="510" width="20" height="20" fill="#67c9e4"/>
<rect x="900" y="510" width="20" height="20" fill="#7dc3e6"/>
<rect x="920" y="510" width="20" height="20" fill="#70c0e7"/>
<rect x="940" y="510" width="20" height="20" fill="#40c0e5"/>
<rect x="960" y="510" width="20" height="20" fill="#21bce7"/>
<rect x="980" y="510" width="20" height="20" fill="#13b6ed"/>
<rect x="1000" y="510" width="20" height="20" fill="#10b0f0"/>
<rect x="1020" y="510" width="20" height="20" fill="#18acf0"/>
<rect x="1040" y="510" width="20" height="20" fill="#2fa6f0"/>
<rect x="1060" y="510" width="20" height="20" fill="#55a0f0"/>
<rect x="1080" y="510" width="20" height="20" fill="#749bee"/>
<rect x="1100" y="510" width="20" height="20" fill="#8c99ec"/>
<rect x="1120" y="510" width="20" height="20" fill="#9b9beb"/>
<rect x="1140" y="510" width="20" height="20" fill="#a1a1ed"/>
<rect x="1160" y="510" width="20" height="20" fill="#a8a6ec"/>
<rect x="1180" y="510" width="20" height="20" fill="#b0a8ea"/>
<rect x="1200" y="510" width="20" height="20" fill="#baaae4"/>
<rect x="1220" y="510" width="20" height="20" fill="#c8acde"/>
<rect x="1240" y="510" width="20" height="20" fill="#d0acd8"/>
<rect x="1260" y="510" width="20" height="20" fill="#d4acd4"/>
<rect x="1280" y="510" width="20" height="20" fill="#daa9ce"/>
<rect x="1300" y="510" width="20" height="20" fill="#e4a3c4"/>
<rect x="1320" y="510" width="20" height="20" fill="#e8a0c0"/>
<rect x="620" y="530" width="20" height="20" fill="#0044ca"/>
<rect x="640" y="530" width="20" height="20" fill="#003ccf"/>
<rect x="660" y="530" width="20" height="20" fill="#002cd9"/>
<rect x="680" y="530" width="20" height="20" fill="#0224e0"/>
<rect x="700" y="530" width="20" height="20" fill="#0624e2"/>
<rect x="720" y="530" width="20" height="20" fill="#2822e1"/>
<rect x="740" y="530" width="20" height="20" fill="#681edb"/>
<rect x="760" y="530" width="20" height="20" fill="#9228d7"/>
<rect x="780" y="530" width="20" height="20" fill="#a842d5"/>
<rect x="800" y="530" width="20" height="20" fill="#ac60d9"/>
<rect x="820" y="530" width="20" height="20" fill="#a282e3"/>
<rect x="840" y="530" width="20" height="20" fill="#92a0e8"/>
<rect x="860" y="530" width="20" height="20" fill="#7eb8e6"/>
<rect x="880" y="530" width="20" height="20" fill="#7dbfe6"/>
<rect x="900" y="530" width="20" height="20" fill="#8fb5e8"/>
<rect x="920" y="530" width="20" height="20" fill="#78b0e9"/>
<rect x="940" y="530" width="20" height="20" fill="#38b0eb"/>
<rect x="960" y="530" width="20" height="20" fill="#1baeed"/>
<rect x="980" y="530" width="20" height="20" fill="#21a8ef"/>
<rect x="1000" y="530" width="20" height="20" fill="#28a0f0"/>
<rect x="1020" y="530" width="20" height="20" fill="#3094f0"/>
<rect x="1040" y="530" width="20" height="20" fill="#4588f0"/>
<rect x="1060" y="530" width="20" height="20" fill="#677af0"/>
<rect x="1080" y="530" width="20" height="20" fill="#8471f0"/>
<rect x="1100" y="530" width="20" height="20" fill="#9c6bee"/>
<rect x="1120" y="530" width="20" height="20" fill="#a179ed"/>
<rect x="1140" y="530" width="20" height="20" fill="#939beb"/>
<rect x="1160" y="530" width="20" height="20" fill="#94acea"/>
<rect x="1180" y="530" width="20" height="20" fill="#a4aee8"/>
<rect x="1200" y="530" width="20" height="20" fill="#b4ace6"/>
<rect x="1220" y="530" width="20" height="20" fill="#c2a6e0"/>
<rect x="1240" y="530" width="20" height="20" fill="#d0a4d8"/>
<rect x="1260" y="530" width="20" height="20" fill="#dca4cc"/>
<rect x="1280" y="530" width="20" height="20" fill="#e4a3c4"/>
<rect x="1300" y="530" width="20" height="20" fill="#e6a1c2"/>
<rect x="1320" y="530" width="20" height="20" fill="#e8a0c0"/>
<rect x="620" y="550" width="20" height="20" fill="#045cca"/>
<rect x="640" y="550" width="20" height="20" fill="#0456ce"/>
<rect x="660" y="550" width="20" height="20" fill="#0448d6"/>
<rect x="680" y="550" width="20" height="20" fill="#0341dc"/>
<rect x="700" y="550" width="20" height="20" fill="#013fe2"/>
<rect x="720" y="550" width="20" height="20" fill="#183ee1"/>
<rect x="740" y="550" width="20" height="20" fill="#483cdb"/>
<rect x="760" y="550" width="20" height="20" fill="#6b48db"/>
<rect x="780" y="550" width="20" height="20" fill="#8160e1"/>
<rect x="800" y="550" width="20" height="20" fill="#8c7ce7"/>
<rect x="820" y="550" width="20" height="20" fill="#8e9aed"/>
<rect x="840" y="550" width="20" height="20" fill="#8cacee"/>
<rect x="860" y="550" width="20" height="20" fill="#8ab2ec"/>
<rect x="880" y="550" width="20" height="20" fill="#8eb0ea"/>
<rect x="900" y="550" width="20" height="20" fill="#9aa6e8"/>
<rect x="920" y="550" width="20" height="20" fill="#7fa4ea"/>
<rect x="940" y="550" width="20" height="20" fill="#3da6ee"/>
<rect x="960" y="550" width="20" height="20" fill="#24a4f0"/>
<rect x="980" y="550" width="20" height="20" fill="#329ef0"/>
<rect x="1000" y="550" width="20" height="20" fill="#3c97ef"/>
<rect x="1020" y="550" width="20" height="20" fill="#3e91ed"/>
<rect x="1040" y="550" width="20" height="20" fill="#4c8aea"/>
<rect x="1060" y="550" width="20" height="20" fill="#6480e8"/>
<rect x="1080" y="550" width="20" height="20" fill="#7a7ae6"/>
<rect x="1100" y="550" width="20" height="20" fill="#8e74e8"/>
<rect x="1120" y="550" width="20" height="20" fill="#9084e8"/>
<rect x="1140" y="550" width="20" height="20" fill="#80a6e6"/>
<rect x="1160" y="550" width="20" height="20" fill="#84b5e6"/>
<rect x="1180" y="550" width="20" height="20" fill="#9eafe8"/>
<rect x="1200" y="550" width="20" height="20" fill="#b2aae6"/>
<rect x="1220" y="550" width="20" height="20" fill="#c2a4e0"/>
<rect x="1240" y="550" width="20" height="20" fill="#d2a1d7"/>
<rect x="1260" y="550" width="20" height="20" fill="#e09fc9"/>
<rect x="1280" y="550" width="20" height="20" fill="#e89ec2"/>
<rect x="1300" y="550" width="20" height="20" fill="#e89ec2"/>
<rect x="1320" y="550" width="20" height="20" fill="#e89ec2"/>
<rect x="620" y="570" width="20" height="20" fill="#0c74ce"/>
<rect x="640" y="570" width="20" height="20" fill="#0c70d2"/>
<rect x="660" y="570" width="20" height="20" fill="#0c6ada"/>
<rect x="680" y="570" width="20" height="20" fill="#0963e2"/>
<rect x="700" y="570" width="20" height="20" fill="#035de8"/>
<rect x="720" y="570" width="20" height="20" fill="#0860eb"/>
<rect x="740" y="570" width="20" height="20" fill="#186ee9"/>
<rect x="760" y="570" width="20" height="20" fill="#3178e9"/>
<rect x="780" y="570" width="20" height="20" fill="#5380eb"/>
<rect x="800" y="570" width="20" height="20" fill="#6e8aed"/>
<rect x="820" y="570" width="20" height="20" fill="#8098ef"/>
<rect x="840" y="570" width="20" height="20" fill="#8e9ef0"/>
<rect x="860" y="570" width="20" height="20" fill="#949cee"/>
<rect x="880" y="570" width="20" height="20" fill="#9a9aec"/>
<rect x="900" y="570" width="20" height="20" fill="#9e98ea"/>
<rect x="920" y="570" width="20" height="20" fill="#859aea"/>
<rect x="940" y="570" width="20" height="20" fill="#4fa4ee"/>
<rect x="960" y="570" width="20" height="20" fill="#3aa2f0"/>
<rect x="980" y="570" width="20" height="20" fill="#4894f0"/>
<rect x="1000" y="570" width="20" height="20" fill="#4a95ed"/>
<rect x="1020" y="570" width="20" height="20" fill="#44a3e7"/>
<rect x="1040" y="570" width="20" height="20" fill="#44ace0"/>
<rect x="1060" y="570" width="20" height="20" fill="#4cb2d6"/>
<rect x="1080" y="570" width="20" height="20" fill="#56b4d4"/>
<rect x="1100" y="570" width="20" height="20" fill="#62b6d6"/>
<rect x="1120" y="570" width="20" height="20" fill="#68bada"/>
<rect x="1140" y="570" width="20" height="20" fill="#68c4e0"/>
<rect x="1160" y="570" width="20" height="20" fill="#7abfe4"/>
<rect x="1180" y="570" width="20" height="20" fill="#9cade6"/>
<rect x="1200" y="570" width="20" height="20" fill="#b6a4e4"/>
<rect x="1220" y="570" width="20" height="20" fill="#c6a6de"/>
<rect x="1240" y="570" width="20" height="20" fill="#d4a3d5"/>
<rect x="1260" y="570" width="20" height="20" fill="#e29dcb"/>
<rect x="1280" y="570" width="20" height="20" fill="#e89ac6"/>
<rect x="1300" y="570" width="20" height="20" fill="#e89ac6"/>
<rect x="1320" y="570" width="20" height="20" fill="#e89ac6"/>
<rect x="620" y="590" width="20" height="20" fill="#0c70d2"/>
<rect x="640" y="590" width="20" height="20" fill="#0c6ed6"/>
<rect x="660" y="590" width="20" height="20" fill="#0c6ade"/>
<rect x="680" y="590" width="20" height="20" fill="#0966e6"/>
<rect x="700" y="590" width="20" height="20" fill="#0360ec"/>
<rect x="720" y="590" width="20" height="20" fill="#0266f0"/>
<rect x="740" y="590" width="20" height="20" fill="#0678f0"/>
<rect x="760" y="590" width="20" height="20" fill="#1682f0"/>
<rect x="780" y="590" width="20" height="20" fill="#3286f0"/>
<rect x="800" y="590" width="20" height="20" fill="#528af0"/>
<rect x="820" y="590" width="20" height="20" fill="#788cf0"/>
<rect x="840" y="590" width="20" height="20" fill="#908af0"/>
<rect x="860" y="590" width="20" height="20" fill="#9e84ee"/>
<rect x="880" y="590" width="20" height="20" fill="#a07fed"/>
<rect x="900" y="590" width="20" height="20" fill="#987deb"/>
<rect x="920" y="590" width="20" height="20" fill="#8082ec"/>
<rect x="940" y="590" width="20" height="20" fill="#588cee"/>
<rect x="960" y="590" width="20" height="20" fill="#488ff0"/>
<rect x="980" y="590" width="20" height="20" fill="#5289ee"/>
<rect x="1000" y="590" width="20" height="20" fill="#4e92eb"/>
<rect x="1020" y="590" width="20" height="20" fill="#3caae5"/>
<rect x="1040" y="590" width="20" height="20" fill="#36bcde"/>
<rect x="1060" y="590" width="20" height="20" fill="#3ac6d4"/>
<rect x="1080" y="590" width="20" height="20" fill="#45ccd2"/>
<rect x="1100" y="590" width="20" height="20" fill="#57ccd6"/>
<rect x="1120" y="590" width="20" height="20" fill="#65cadb"/>
<rect x="1140" y="590" width="20" height="20" fill="#6fc8e1"/>
<rect x="1160" y="590" width="20" height="20" fill="#84bce4"/>
<rect x="1180" y="590" width="20" height="20" fill="#a4aae6"/>
<rect x="1200" y="590" width="20" height="20" fill="#baa0e3"/>
<rect x="1220" y="590" width="20" height="20" fill="#c69edd"/>
<rect x="1240" y="590" width="20" height="20" fill="#d49ad5"/>
<rect x="1260" y="590" width="20" height="20" fill="#e292cb"/>
<rect x="1280" y="590" width="20" height="20" fill="#ea8ec6"/>
<rect x="1300" y="590" width="20" height="20" fill="#ea8ec6"/>
<rect x="1320" y="590" width="20" height="20" fill="#ea8ec6"/>
<rect x="620" y="610" width="20" height="20" fill="#0450d6"/>
<rect x="640" y="610" width="20" height="20" fill="#044eda"/>
<rect x="660" y="610" width="20" height="20" fill="#044ae2"/>
<rect x="680" y="610" width="20" height="20" fill="#0348e8"/>
<rect x="700" y="610" width="20" height="20" fill="#014aee"/>
<rect x="720" y="610" width="20" height="20" fill="#0650f0"/>
<rect x="740" y="610" width="20" height="20" fill="#125af0"/>
<rect x="760" y="610" width="20" height="20" fill="#1a66f0"/>
<rect x="780" y="610" width="20" height="20" fill="#1e72f0"/>
<rect x="800" y="610" width="20" height="20" fill="#3c78f0"/>
<rect x="820" y="610" width="20" height="20" fill="#727af0"/>
<rect x="840" y="610" width="20" height="20" fill="#9674ee"/>
<rect x="860" y="610" width="20" height="20" fill="#a466ec"/>
<rect x="880" y="610" width="20" height="20" fill="#a05deb"/>
<rect x="900" y="610" width="20" height="20" fill="#8857ed"/>
<rect x="920" y="610" width="20" height="20" fill="#7058ee"/>
<rect x="940" y="610" width="20" height="20" fill="#5862f0"/>
<rect x="960" y="610" width="20" height="20" fill="#4e6dee"/>
<rect x="980" y="610" width="20" height="20" fill="#507bec"/>
<rect x="1000" y="610" width="20" height="20" fill="#448ee9"/>
<rect x="1020" y="610" width="20" height="20" fill="#2aa6e7"/>
<rect x="1040" y="610" width="20" height="20" fill="#22b6e4"/>
<rect x="1060" y="610" width="20" height="20" fill="#2ec0e2"/>
<rect x="1080" y="610" width="20" height="20" fill="#47c0e2"/>
<rect x="1100" y="610" width="20" height="20" fill="#6db8e6"/>
<rect x="1120" y="610" width="20" height="20" fill="#87b4e9"/>
<rect x="1140" y="610" width="20" height="20" fill="#95b2eb"/>
<rect x="1160" y="610" width="20" height="20" fill="#a4aeea"/>
<rect x="1180" y="610" width="20" height="20" fill="#b4a4e4"/>
<rect x="1200" y="610" width="20" height="20" fill="#be9ae1"/>
<rect x="1220" y="610" width="20" height="20" fill="#c290df"/>
<rect x="1240" y="610" width="20" height="20" fill="#ce86d7"/>
<rect x="1260" y="610" width="20" height="20" fill="#e47ec9"/>
<rect x="1280" y="610" width="20" height="20" fill="#ee7ac2"/>
<rect x="1300" y="610" width="20" height="20" fill="#ee7ac2"/>
<rect x="1320" y="610" width="20" height="20" fill="#ee7ac2"/>
<rect x="620" y="630" width="20" height="20" fill="#0034da"/>
<rect x="640" y="630" width="20" height="20" fill="#0032de"/>
<rect x="660" y="630" width="20" height="20" fill="#002ee4"/>
<rect x="680" y="630" width="20" height="20" fill="#002dea"/>
<rect x="700" y="630" width="20" height="20" fill="#002fee"/>
<rect x="720" y="630" width="20" height="20" fill="#0733f0"/>
<rect x="740" y="630" width="20" height="20" fill="#1539f0"/>
<rect x="760" y="630" width="20" height="20" fill="#1b43f0"/>
<rect x="780" y="630" width="20" height="20" fill="#1951f0"/>
<rect x="800" y="630" width="20" height="20" fill="#3359f0"/>
<rect x="820" y="630" width="20" height="20" fill="#695bf0"/>
<rect x="840" y="630" width="20" height="20" fill="#9058ee"/>
<rect x="860" y="630" width="20" height="20" fill="#a850e8"/>
<rect x="880" y="630" width="20" height="20" fill="#a145e8"/>
<rect x="900" y="630" width="20" height="20" fill="#7b37ee"/>
<rect x="920" y="630" width="20" height="20" fill="#6634f0"/>
<rect x="940" y="630" width="20" height="20" fill="#623cf0"/>
<rect x="960" y="630" width="20" height="20" fill="#584dee"/>
<rect x="980" y="630" width="20" height="20" fill="#4867e8"/>
<rect x="1000" y="630" width="20" height="20" fill="#347fe7"/>
<rect x="1020" y="630" width="20" height="20" fill="#1c95e9"/>
<rect x="1040" y="630" width="20" height="20" fill="#1ca1ea"/>
<rect x="1060" y="630" width="20" height="20" fill="#34a3ea"/>
<rect x="1080" y="630" width="20" height="20" fill="#53a0ec"/>
<rect x="1100" y="630" width="20" height="20" fill="#7996ee"/>
<rect x="1120" y="630" width="20" height="20" fill="#9593f0"/>
<rect x="1140" y="630" width="20" height="20" fill="#a795ee"/>
<rect x="1160" y="630" width="20" height="20" fill="#b594ea"/>
<rect x="1180" y="630" width="20" height="20" fill="#bf8ee4"/>
<rect x="1200" y="630" width="20" height="20" fill="#c487e0"/>
<rect x="1220" y="630" width="20" height="20" fill="#c47de0"/>
<rect x="1240" y="630" width="20" height="20" fill="#cf71d8"/>
<rect x="1260" y="630" width="20" height="20" fill="#e563c8"/>
<rect x="1280" y="630" width="20" height="20" fill="#f05cc0"/>
<rect x="1300" y="630" width="20" height="20" fill="#f05cc0"/>
<rect x="1320" y="630" width="20" height="20" fill="#f05cc0"/>
<rect x="620" y="650" width="20" height="20" fill="#001cde"/>
<rect x="640" y="650" width="20" height="20" fill="#001ae0"/>
<rect x="660" y="650" width="20" height="20" fill="#0016e6"/>
<rect x="680" y="650" width="20" height="20" fill="#0013ea"/>
<rect x="700" y="650" width="20" height="20" fill="#0011ee"/>
<rect x="720" y="650" width="20" height="20" fill="#0511f0"/>
<rect x="740" y="650" width="20" height="20" fill="#0f13f0"/>
<rect x="760" y="650" width="20" height="20" fill="#1919f0"/>
<rect x="780" y="650" width="20" height="20" fill="#2323f0"/>
<rect x="800" y="650" width="20" height="20" fill="#392bf0"/>
<rect x="820" y="650" width="20" height="20" fill="#5b31f0"/>
<rect x="840" y="650" width="20" height="20" fill="#8038ec"/>
<rect x="860" y="650" width="20" height="20" fill="#a840e6"/>
<rect x="880" y="650" width="20" height="20" fill="#a337e6"/>
<rect x="900" y="650" width="20" height="20" fill="#711dec"/>
<rect x="920" y="650" width="20" height="20" fill="#6214f0"/>
<rect x="940" y="650" width="20" height="20" fill="#761cf0"/>
<rect x="960" y="650" width="20" height="20" fill="#682fec"/>
<rect x="980" y="650" width="20" height="20" fill="#384de6"/>
<rect x="1000" y="650" width="20" height="20" fill="#1c65e5"/>
<rect x="1020" y="650" width="20" height="20" fill="#1477eb"/>
<rect x="1040" y="650" width="20" height="20" fill="#247bee"/>
<rect x="1060" y="650" width="20" height="20" fill="#4c71ee"/>
<rect x="1080" y="650" width="20" height="20" fill="#696aee"/>
<rect x="1100" y="650" width="20" height="20" fill="#7b68f0"/>
<rect x="1120" y="650" width="20" height="20" fill="#8f69ee"/>
<rect x="1140" y="650" width="20" height="20" fill="#a56fec"/>
<rect x="1160" y="650" width="20" height="20" fill="#b76ee8"/>
<rect x="1180" y="650" width="20" height="20" fill="#c568e2"/>
<rect x="1200" y="650" width="20" height="20" fill="#cc65e0"/>
<rect x="1220" y="650" width="20" height="20" fill="#cc67e0"/>
<rect x="1240" y="650" width="20" height="20" fill="#d55bd8"/>
<rect x="1260" y="650" width="20" height="20" fill="#e741c8"/>
<rect x="1280" y="650" width="20" height="20" fill="#f034c0"/>
<rect x="1300" y="650" width="20" height="20" fill="#f034c0"/>
<rect x="1320" y="650" width="20" height="20" fill="#f034c0"/>
<rect x="620" y="670" width="20" height="20" fill="#0010e0"/>
<rect x="640" y="670" width="20" height="20" fill="#000ee1"/>
<rect x="660" y="670" width="20" height="20" fill="#0008e3"/>
<rect x="680" y="670" width="20" height="20" fill="#0004e6"/>
<rect x="700" y="670" width="20" height="20" fill="#0002ec"/>
<rect x="720" y="670" width="20" height="20" fill="#0300ee"/>
<rect x="740" y="670" width="20" height="20" fill="#0900ee"/>
<rect x="760" y="670" width="20" height="20" fill="#1503ee"/>
<rect x="780" y="670" width="20" height="20" fill="#2709ee"/>
<rect x="800" y="670" width="20" height="20" fill="#3910ee"/>
<rect x="820" y="670" width="20" height="20" fill="#4b18f0"/>
<rect x="840" y="670" width="20" height="20" fill="#6e21ec"/>
<rect x="860" y="670" width="20" height="20" fill="#a22be4"/>
<rect x="880" y="670" width="20" height="20" fill="#a225e4"/>
<rect x="900" y="670" width="20" height="20" fill="#6e0fec"/>
<rect x="920" y="670" width="20" height="20" fill="#6506f0"/>
<rect x="940" y="670" width="20" height="20" fill="#870aee"/>
<rect x="960" y="670" width="20" height="20" fill="#7518e9"/>
<rect x="980" y="670" width="20" height="20" fill="#2f30df"/>
<rect x="1000" y="670" width="20" height="20" fill="#0d42e0"/>
<rect x="1020" y="670" width="20" height="20" fill="#0f4eea"/>
<rect x="1040" y="670" width="20" height="20" fill="#254ef0"/>
<rect x="1060" y="670" width="20" height="20" fill="#4f42f0"/>
<rect x="1080" y="670" width="20" height="20" fill="#6a40f0"/>
<rect x="1100" y="670" width="20" height="20" fill="#7648f0"/>
<rect x="1120" y="670" width="20" height="20" fill="#884dee"/>
<rect x="1140" y="670" width="20" height="20" fill="#a04fea"/>
<rect x="1160" y="670" width="20" height="20" fill="#b44ce6"/>
<rect x="1180" y="670" width="20" height="20" fill="#c444e2"/>
<rect x="1200" y="670" width="20" height="20" fill="#cd43e0"/>
<rect x="1220" y="670" width="20" height="20" fill="#cf49de"/>
<rect x="1240" y="670" width="20" height="20" fill="#d840d7"/>
<rect x="1260" y="670" width="20" height="20" fill="#e828c9"/>
<rect x="1280" y="670" width="20" height="20" fill="#e528c2"/>
<rect x="1300" y="670" width="20" height="20" fill="#cf42c4"/>
<rect x="1320" y="670" width="20" height="20" fill="#c44ec4"/>
<rect x="620" y="690" width="20" height="20" fill="#0010e0"/>
<rect x="640" y="690" width="20" height="20" fill="#000cdf"/>
<rect x="660" y="690" width="20" height="20" fill="#0006dd"/>
<rect x="680" y="690" width="20" height="20" fill="#0002e0"/>
<rect x="700" y="690" width="20" height="20" fill="#0000e6"/>
<rect x="720" y="690" width="20" height="20" fill="#0100ea"/>
<rect x="740" y="690" width="20" height="20" fill="#0300ea"/>
<rect x="760" y="690" width="20" height="20" fill="#0f01ea"/>
<rect x="780" y="690" width="20" height="20" fill="#2503ea"/>
<rect x="800" y="690" width="20" height="20" fill="#3308ec"/>
<rect x="820" y="690" width="20" height="20" fill="#3910ee"/>
<rect x="840" y="690" width="20" height="20" fill="#5a13ec"/>
<rect x="860" y="690" width="20" height="20" fill="#9611e4"/>
<rect x="880" y="690" width="20" height="20" fill="#9e0fe4"/>
<rect x="900" y="690" width="20" height="20" fill="#720dec"/>
<rect x="920" y="690" width="20" height="20" fill="#6f0aee"/>
<rect x="940" y="690" width="20" height="20" fill="#9506ec"/>
<rect x="960" y="690" width="20" height="20" fill="#7f08e3"/>
<rect x="980" y="690" width="20" height="20" fill="#2d10d5"/>
<rect x="1000" y="690" width="20" height="20" fill="#0716d6"/>
<rect x="1020" y="690" width="20" height="20" fill="#0d1ae8"/>
<rect x="1040" y="690" width="20" height="20" fill="#1f1af0"/>
<rect x="1060" y="690" width="20" height="20" fill="#3d16f0"/>
<rect x="1080" y="690" width="20" height="20" fill="#5620f0"/>
<rect x="1100" y="690" width="20" height="20" fill="#6a38f0"/>
<rect x="1120" y="690" width="20" height="20" fill="#803fee"/>
<rect x="1140" y="690" width="20" height="20" fill="#9835ea"/>
<rect x="1160" y="690" width="20" height="20" fill="#ac2ce6"/>
<rect x="1180" y="690" width="20" height="20" fill="#bc24e2"/>
<rect x="1200" y="690" width="20" height="20" fill="#c721de"/>
<rect x="1220" y="690" width="20" height="20" fill="#cd23dc"/>
<rect x="1240" y="690" width="20" height="20" fill="#d820d5"/>
<rect x="1260" y="690" width="20" height="20" fill="#e818cb"/>
<rect x="1280" y="690" width="20" height="20" fill="#cf3ac8"/>
<rect x="1300" y="690" width="20" height="20" fill="#8d84ca"/>
<rect x="1320" y="690" width="20" height="20" fill="#6caacc"/>
<rect x="620" y="710" width="20" height="20" fill="#000cde"/>
<rect x="640" y="710" width="20" height="20" fill="#0009dc"/>
<rect x="660" y="710" width="20" height="20" fill="#0003da"/>
<rect x="680" y="710" width="20" height="20" fill="#0000da"/>
<rect x="700" y="710" width="20" height="20" fill="#0000e0"/>
<rect x="720" y="710" width="20" height="20" fill="#0000e2"/>
<rect x="740" y="710" width="20" height="20" fill="#0000e4"/>
<rect x="760" y="710" width="20" height="20" fill="#0900e4"/>
<rect x="780" y="710" width="20" height="20" fill="#1b00e4"/>
<rect x="800" y="710" width="20" height="20" fill="#2704e6"/>
<rect x="820" y="710" width="20" height="20" fill="#2d0ce8"/>
<rect x="840" y="710" width="20" height="20" fill="#490ce8"/>
<rect x="860" y="710" width="20" height="20" fill="#7b04e4"/>
<rect x="880" y="710" width="20" height="20" fill="#8603e6"/>
<rect x="900" y="710" width="20" height="20" fill="#6a09ec"/>
<rect x="920" y="710" width="20" height="20" fill="#7309ee"/>
<rect x="940" y="710" width="20" height="20" fill="#a103e8"/>
<rect x="960" y="710" width="20" height="20" fill="#8a00df"/>
<rect x="980" y="710" width="20" height="20" fill="#2e00d1"/>
<rect x="1000" y="710" width="20" height="20" fill="#0300d2"/>
<rect x="1020" y="710" width="20" height="20" fill="#0900e2"/>
<rect x="1040" y="710" width="20" height="20" fill="#1700ec"/>
<rect x="1060" y="710" width="20" height="20" fill="#2d00ee"/>
<rect x="1080" y="710" width="20" height="20" fill="#470cf0"/>
<rect x="1100" y="710" width="20" height="20" fill="#6524ee"/>
<rect x="1120" y="710" width="20" height="20" fill="#812aec"/>
<rect x="1140" y="710" width="20" height="20" fill="#9b1ee8"/>
<rect x="1160" y="710" width="20" height="20" fill="#ae15e4"/>
<rect x="1180" y="710" width="20" height="20" fill="#ba0fe2"/>
<rect x="1200" y="710" width="20" height="20" fill="#c40cde"/>
<rect x="1220" y="710" width="20" height="20" fill="#cc0cda"/>
<rect x="1240" y="710" width="20" height="20" fill="#d510d4"/>
<rect x="1260" y="710" width="20" height="20" fill="#df18ce"/>
<rect x="1280" y="710" width="20" height="20" fill="#be48cd"/>
<rect x="1300" y="710" width="20" height="20" fill="#72a2d3"/>
<rect x="1320" y="710" width="20" height="20" fill="#4cced6"/>
<rect x="620" y="730" width="20" height="20" fill="#0004da"/>
<rect x="640" y="730" width="20" height="20" fill="#0003da"/>
<rect x="660" y="730" width="20" height="20" fill="#0001d8"/>
<rect x="680" y="730" width="20" height="20" fill="#0000d8"/>
<rect x="700" y="730" width="20" height="20" fill="#0000d6"/>
<rect x="720" y="730" width="20" height="20" fill="#0000d8"/>
<rect x="740" y="730" width="20" height="20" fill="#0000da"/>
<rect x="760" y="730" width="20" height="20" fill="#0300dc"/>
<rect x="780" y="730" width="20" height="20" fill="#0900dc"/>
<rect x="800" y="730" width="20" height="20" fill="#1504dc"/>
<rect x="820" y="730" width="20" height="20" fill="#270cde"/>
<rect x="840" y="730" width="20" height="20" fill="#3b0ce0"/>
<rect x="860" y="730" width="20" height="20" fill="#5104e4"/>
<rect x="880" y="730" width="20" height="20" fill="#5a01e8"/>
<rect x="900" y="730" width="20" height="20" fill="#5603ee"/>
<rect x="920" y="730" width="20" height="20" fill="#7103ec"/>
<rect x="940" y="730" width="20" height="20" fill="#ab01e6"/>
<rect x="960" y="730" width="20" height="20" fill="#9600dd"/>
<rect x="980" y="730" width="20" height="20" fill="#3200d3"/>
<rect x="1000" y="730" width="20" height="20" fill="#0100d2"/>
<rect x="1020" y="730" width="20" height="20" fill="#0300da"/>
<rect x="1040" y="730" width="20" height="20" fill="#0d00e2"/>
<rect x="1060" y="730" width="20" height="20" fill="#1f00ec"/>
<rect x="1080" y="730" width="20" height="20" fill="#3d04ee"/>
<rect x="1100" y="730" width="20" height="20" fill="#670cec"/>
<rect x="1120" y="730" width="20" height="20" fill="#8b0ee8"/>
<rect x="1140" y="730" width="20" height="20" fill="#a90ae4"/>
<rect x="1160" y="730" width="20" height="20" fill="#ba07e2"/>
<rect x="1180" y="730" width="20" height="20" fill="#be05e0"/>
<rect x="1200" y="730" width="20" height="20" fill="#c404de"/>
<rect x="1220" y="730" width="20" height="20" fill="#cc04da"/>
<rect x="1240" y="730" width="20" height="20" fill="#cf10d6"/>
<rect x="1260" y="730" width="20" height="20" fill="#cd28d0"/>
<rect x="1280" y="730" width="20" height="20" fill="#b256d3"/>
<rect x="1300" y="730" width="20" height="20" fill="#7e98dd"/>
<rect x="1320" y="730" width="20" height="20" fill="#64bae2"/>
<rect x="620" y="750" width="20" height="20" fill="#0000d8"/>
<rect x="640" y="750" width="20" height="20" fill="#0000d8"/>
<rect x="660" y="750" width="20" height="20" fill="#0000d6"/>
<rect x="680" y="750" width="20" height="20" fill="#0000d4"/>
<rect x="700" y="750" width="20" height="20" fill="#0000d2"/>
<rect x="720" y="750" width="20" height="20" fill="#0000d0"/>
<rect x="740" y="750" width="20" height="20" fill="#0000d0"/>
<rect x="760" y="750" width="20" height="20" fill="#0003d1"/>
<rect x="780" y="750" width="20" height="20" fill="#0009d3"/>
<rect x="800" y="750" width="20" height="20" fill="#090fd5"/>
<rect x="820" y="750" width="20" height="20" fill="#1b15d7"/>
<rect x="840" y="750" width="20" height="20" fill="#2712dc"/>
<rect x="860" y="750" width="20" height="20" fill="#2d06e4"/>
<rect x="880" y="750" width="20" height="20" fill="#3901ea"/>
<rect x="900" y="750" width="20" height="20" fill="#4b03ee"/>
<rect x="920" y="750" width="20" height="20" fill="#7103ec"/>
<rect x="940" y="750" width="20" height="20" fill="#ab01e6"/>
<rect x="960" y="750" width="20" height="20" fill="#9600de"/>
<rect x="980" y="750" width="20" height="20" fill="#3200d8"/>
<rect x="1000" y="750" width="20" height="20" fill="#0000d5"/>
<rect x="1020" y="750" width="20" height="20" fill="#0000d7"/>
<rect x="1040" y="750" width="20" height="20" fill="#0700de"/>
<rect x="1060" y="750" width="20" height="20" fill="#1500ea"/>
<rect x="1080" y="750" width="20" height="20" fill="#3201ee"/>
<rect x="1100" y="750" width="20" height="20" fill="#5e03ec"/>
<rect x="1120" y="750" width="20" height="20" fill="#8504e8"/>
<rect x="1140" y="750" width="20" height="20" fill="#a704e4"/>
<rect x="1160" y="750" width="20" height="20" fill="#bb04e1"/>
<rect x="1180" y="750" width="20" height="20" fill="#c104df"/>
<rect x="1200" y="750" width="20" height="20" fill="#c803dc"/>
<rect x="1220" y="750" width="20" height="20" fill="#d001d8"/>
<rect x="1240" y="750" width="20" height="20" fill="#cd11d6"/>
<rect x="1260" y="750" width="20" height="20" fill="#bf33d6"/>
<rect x="1280" y="750" width="20" height="20" fill="#a958da"/>
<rect x="1300" y="750" width="20" height="20" fill="#8b80e2"/>
<rect x="1320" y="750" width="20" height="20" fill="#7c94e6"/>
<rect x="620" y="770" width="20" height="20" fill="#0000d8"/>
<rect x="640" y="770" width="20" height="20" fill="#0000d6"/>
<rect x="660" y="770" width="20" height="20" fill="#0000d4"/>
<rect x="680" y="770" width="20" height="20" fill="#0000d2"/>
<rect x="700" y="770" width="20" height="20" fill="#0000d0"/>
<rect x="720" y="770" width="20" height="20" fill="#0000cc"/>
<rect x="740" y="770" width="20" height="20" fill="#0000c4"/>
<rect x="760" y="770" width="20" height="20" fill="#0009c3"/>
<rect x="780" y="770" width="20" height="20" fill="#001bc9"/>
<rect x="800" y="770" width="20" height="20" fill="#0325cf"/>
<rect x="820" y="770" width="20" height="20" fill="#0927d5"/>
<rect x="840" y="770" width="20" height="20" fill="#0d1edc"/>
<rect x="860" y="770" width="20" height="20" fill="#0f0ae4"/>
<rect x="880" y="770" width="20" height="20" fill="#2303ea"/>
<rect x="900" y="770" width="20" height="20" fill="#4909ee"/>
<rect x="920" y="770" width="20" height="20" fill="#7309ee"/>
<rect x="940" y="770" width="20" height="20" fill="#a103e8"/>
<rect x="960" y="770" width="20" height="20" fill="#8a00e4"/>
<rect x="980" y="770" width="20" height="20" fill="#2e00de"/>
<rect x="1000" y="770" width="20" height="20" fill="#0000db"/>
<rect x="1020" y="770" width="20" height="20" fill="#0000d9"/>
<rect x="1040" y="770" width="20" height="20" fill="#0500de"/>
<rect x="1060" y="770" width="20" height="20" fill="#0f00ea"/>
<rect x="1080" y="770" width="20" height="20" fill="#2603f0"/>
<rect x="1100" y="770" width="20" height="20" fill="#4a09ee"/>
<rect x="1120" y="770" width="20" height="20" fill="#6f0cec"/>
<rect x="1140" y="770" width="20" height="20" fill="#950ce8"/>
<rect x="1160" y="770" width="20" height="20" fill="#b10ce3"/>
<rect x="1180" y="770" width="20" height="20" fill="#c30cdd"/>
<rect x="1200" y="770" width="20" height="20" fill="#d009d8"/>
<rect x="1220" y="770" width="20" height="20" fill="#d803d4"/>
<rect x="1240" y="770" width="20" height="20" fill="#cf13d6"/>
<rect x="1260" y="770" width="20" height="20" fill="#b539de"/>
<rect x="1280" y="770" width="20" height="20" fill="#a350e2"/>
<rect x="1300" y="770" width="20" height="20" fill="#9958e2"/>
<rect x="1320" y="770" width="20" height="20" fill="#945ce2"/>
<rect x="620" y="790" width="20" height="20" fill="#0426da"/>
<rect x="640" y="790" width="20" height="20" fill="#0426d8"/>
<rect x="660" y="790" width="20" height="20" fill="#0426d6"/>
<rect x="680" y="790" width="20" height="20" fill="#0426d4"/>
<rect x="700" y="790" width="20" height="20" fill="#0426d4"/>
<rect x="720" y="790" width="20" height="20" fill="#052ace"/>
<rect x="740" y="790" width="20" height="20" fill="#0730c0"/>
<rect x="760" y="790" width="20" height="20" fill="#073abe"/>
<rect x="780" y="790" width="20" height="20" fill="#0548c8"/>
<rect x="800" y="790" width="20" height="20" fill="#044cd0"/>
<rect x="820" y="790" width="20" height="20" fill="#024ad6"/>
<rect x="840" y="790" width="20" height="20" fill="#0239de"/>
<rect x="860" y="790" width="20" height="20" fill="#001be6"/>
<rect x="880" y="790" width="20" height="20" fill="#1910ec"/>
<rect x="900" y="790" width="20" height="20" fill="#4b18ee"/>
<rect x="920" y="790" width="20" height="20" fill="#731bee"/>
<rect x="940" y="790" width="20" height="20" fill="#9119ea"/>
<rect x="960" y="790" width="20" height="20" fill="#781ae6"/>
<rect x="980" y="790" width="20" height="20" fill="#2a1ce4"/>
<rect x="1000" y="790" width="20" height="20" fill="#021ae0"/>
<rect x="1020" y="790" width="20" height="20" fill="#0410dc"/>
<rect x="1040" y="790" width="20" height="20" fill="#0609de"/>
<rect x="1060" y="790" width="20" height="20" fill="#0a03e6"/>
<rect x="1080" y="790" width="20" height="20" fill="#1b04eb"/>
<rect x="1100" y="790" width="20" height="20" fill="#390ced"/>
<rect x="1120" y="790" width="20" height="20" fill="#5e10ec"/>
<rect x="1140" y="790" width="20" height="20" fill="#8a10e8"/>
<rect x="1160" y="790" width="20" height="20" fill="#ac0fe2"/>
<rect x="1180" y="790" width="20" height="20" fill="#c40ddc"/>
<rect x="1200" y="790" width="20" height="20" fill="#d409d6"/>
<rect x="1220" y="790" width="20" height="20" fill="#dc03d0"/>
<rect x="1240" y="790" width="20" height="20" fill="#ce11d4"/>
<rect x="1260" y="790" width="20" height="20" fill="#aa33e0"/>
<rect x="1280" y="790" width="20" height="20" fill="#9d40e4"/>
<rect x="1300" y="790" width="20" height="20" fill="#a738de"/>
<rect x="1320" y="790" width="20" height="20" fill="#ac34dc"/>
<rect x="620" y="810" width="20" height="20" fill="#0c72de"/>
<rect x="640" y="810" width="20" height="20" fill="#0c72de"/>
<rect x="660" y="810" width="20" height="20" fill="#0c72dc"/>
<rect x="680" y="810" width="20" height="20" fill="#0c72dc"/>
<rect x="700" y="810" width="20" height="20" fill="#0c72dc"/>
<rect x="720" y="810" width="20" height="20" fill="#0f7cd4"/>
<rect x="740" y="810" width="20" height="20" fill="#1592c6"/>
<rect x="760" y="810" width="20" height="20" fill="#1598c4"/>
<rect x="780" y="810" width="20" height="20" fill="#0f8ece"/>
<rect x="800" y="810" width="20" height="20" fill="#0a86d6"/>
<rect x="820" y="810" width="20" height="20" fill="#087cdc"/>
<rect x="840" y="810" width="20" height="20" fill="#0463e2"/>
<rect x="860" y="810" width="20" height="20" fill="#0239ea"/>
<rect x="880" y="810" width="20" height="20" fill="#1b28ee"/>
<rect x="900" y="810" width="20" height="20" fill="#5130f0"/>
<rect x="920" y="810" width="20" height="20" fill="#7139ee"/>
<rect x="940" y="810" width="20" height="20" fill="#7b43ea"/>
<rect x="960" y="810" width="20" height="20" fill="#624ce8"/>
<rect x="980" y="810" width="20" height="20" fill="#2456e6"/>
<rect x="1000" y="810" width="20" height="20" fill="#084ce4"/>
<rect x="1020" y="810" width="20" height="20" fill="#0a32e0"/>
<rect x="1040" y="810" width="20" height="20" fill="#0a1bde"/>
<rect x="1060" y="810" width="20" height="20" fill="#0609de"/>
<rect x="1080" y="810" width="20" height="20" fill="#1104e1"/>
<rect x="1100" y="810" width="20" height="20" fill="#2b0ce7"/>
<rect x="1120" y="810" width="20" height="20" fill="#5210e8"/>
<rect x="1140" y="810" width="20" height="20" fill="#8610e4"/>
<rect x="1160" y="810" width="20" height="20" fill="#ac0de0"/>
<rect x="1180" y="810" width="20" height="20" fill="#c407da"/>
<rect x="1200" y="810" width="20" height="20" fill="#d403d4"/>
<rect x="1220" y="810" width="20" height="20" fill="#dc01ce"/>
<rect x="1240" y="810" width="20" height="20" fill="#ca0bd0"/>
<rect x="1260" y="810" width="20" height="20" fill="#9e21dc"/>
<rect x="1280" y="810" width="20" height="20" fill="#9728de"/>
<rect x="1300" y="810" width="20" height="20" fill="#b520d8"/>
<rect x="1320" y="810" width="20" height="20" fill="#c41cd4"/>
<rect x="620" y="830" width="20" height="20" fill="#1098e0"/>
<rect x="640" y="830" width="20" height="20" fill="#1098e0"/>
<rect x="660" y="830" width="20" height="20" fill="#1098e0"/>
<rect x="680" y="830" width="20" height="20" fill="#1098e0"/>
<rect x="700" y="830" width="20" height="20" fill="#1098e0"/>
<rect x="720" y="830" width="20" height="20" fill="#12a6da"/>
<rect x="740" y="830" width="20" height="20" fill="#16c0ce"/>
<rect x="760" y="830" width="20" height="20" fill="#17c7cc"/>
<rect x="780" y="830" width="20" height="20" fill="#15b9d2"/>
<rect x="800" y="830" width="20" height="20" fill="#14aed8"/>
<rect x="820" y="830" width="20" height="20" fill="#16a6dc"/>
<rect x="840" y="830" width="20" height="20" fill="#1a8fe2"/>
<rect x="860" y="830" width="20" height="20" fill="#2069e8"/>
<rect x="880" y="830" width="20" height="20" fill="#3a56ec"/>
<rect x="900" y="830" width="20" height="20" fill="#6654ee"/>
<rect x="920" y="830" width="20" height="20" fill="#735cec"/>
<rect x="940" y="830" width="20" height="20" fill="#616ce8"/>
<rect x="960" y="830" width="20" height="20" fill="#447ae6"/>
<rect x="980" y="830" width="20" height="20" fill="#1e88e4"/>
<rect x="1000" y="830" width="20" height="20" fill="#1480e3"/>
<rect x="1020" y="830" width="20" height="20" fill="#2a64e1"/>
<rect x="1040" y="830" width="20" height="20" fill="#314ade"/>
<rect x="1060" y="830" width="20" height="20" fill="#2b30dc"/>
<rect x="1080" y="830" width="20" height="20" fill="#301fde"/>
<rect x="1100" y="830" width="20" height="20" fill="#4015e4"/>
<rect x="1120" y="830" width="20" height="20" fill="#5c10e6"/>
<rect x="1140" y="830" width="20" height="20" fill="#8410e2"/>
<rect x="1160" y="830" width="20" height="20" fill="#a410de"/>
<rect x="1180" y="830" width="20" height="20" fill="#bc10dc"/>
<rect x="1200" y="830" width="20" height="20" fill="#cd0cd6"/>
<rect x="1220" y="830" width="20" height="20" fill="#d704ce"/>
<rect x="1240" y="830" width="20" height="20" fill="#c906ce"/>
<rect x="1260" y="830" width="20" height="20" fill="#a312d8"/>
<rect x="1280" y="830" width="20" height="20" fill="#9f15d9"/>
<rect x="1300" y="830" width="20" height="20" fill="#bd0fd3"/>
<rect x="1320" y="830" width="20" height="20" fill="#cc0cd0"/>
<rect x="620" y="850" width="20" height="20" fill="#1098e0"/>
<rect x="640" y="850" width="20" height="20" fill="#1098e0"/>
<rect x="660" y="850" width="20" height="20" fill="#1098e0"/>
<rect x="680" y="850" width="20" height="20" fill="#1098e0"/>
<rect x="700" y="850" width="20" height="20" fill="#1098e0"/>
<rect x="720" y="850" width="20" height="20" fill="#0ea4de"/>
<rect x="740" y="850" width="20" height="20" fill="#0abeda"/>
<rect x="760" y="850" width="20" height="20" fill="#0dc9d6"/>
<rect x="780" y="850" width="20" height="20" fill="#17c7d4"/>
<rect x="800" y="850" width="20" height="20" fill="#22c6d4"/>
<rect x="820" y="850" width="20" height="20" fill="#2cc6d8"/>
<rect x="840" y="850" width="20" height="20" fill="#40bddc"/>
<rect x="860" y="850" width="20" height="20" fill="#5eabe2"/>
<rect x="880" y="850" width="20" height="20" fill="#7698e6"/>
<rect x="900" y="850" width="20" height="20" fill="#8a86e8"/>
<rect x="920" y="850" width="20" height="20" fill="#7984e8"/>
<rect x="940" y="850" width="20" height="20" fill="#4394e4"/>
<rect x="960" y="850" width="20" height="20" fill="#22a4e0"/>
<rect x="980" y="850" width="20" height="20" fill="#14b2de"/>
<rect x="1000" y="850" width="20" height="20" fill="#2ab4dd"/>
<rect x="1020" y="850" width="20" height="20" fill="#60a8df"/>
<rect x="1040" y="850" width="20" height="20" fill="#7b94e0"/>
<rect x="1060" y="850" width="20" height="20" fill="#797ade"/>
<rect x="1080" y="850" width="20" height="20" fill="#7855e0"/>
<rect x="1100" y="850" width="20" height="20" fill="#7827e6"/>
<rect x="1120" y="850" width="20" height="20" fill="#7c10e6"/>
<rect x="1140" y="850" width="20" height="20" fill="#8410e2"/>
<rect x="1160" y="850" width="20" height="20" fill="#9418e0"/>
<rect x="1180" y="850" width="20" height="20" fill="#ac28de"/>
<rect x="1200" y="850" width="20" height="20" fill="#bf24da"/>
<rect x="1220" y="850" width="20" height="20" fill="#cd0cd2"/>
<rect x="1240" y="850" width="20" height="20" fill="#cb02d0"/>
<rect x="1260" y="850" width="20" height="20" fill="#b906d2"/>
<rect x="1280" y="850" width="20" height="20" fill="#b507d3"/>
<rect x="1300" y="850" width="20" height="20" fill="#bf05d1"/>
<rect x="1320" y="850" width="20" height="20" fill="#c404d0"/>
<rect x="620" y="870" width="20" height="20" fill="#0c82e0"/>
<rect x="640" y="870" width="20" height="20" fill="#0c82e0"/>
<rect x="660" y="870" width="20" height="20" fill="#0c82e0"/>
<rect x="680" y="870" width="20" height="20" fill="#0c82e0"/>
<rect x="700" y="870" width="20" height="20" fill="#0c82e0"/>
<rect x="720" y="870" width="20" height="20" fill="#0a8ee0"/>
<rect x="740" y="870" width="20" height="20" fill="#04a8e0"/>
<rect x="760" y="870" width="20" height="20" fill="#08b4dd"/>
<rect x="780" y="870" width="20" height="20" fill="#12b4d7"/>
<rect x="800" y="870" width="20" height="20" fill="#21b8d6"/>
<rect x="820" y="870" width="20" height="20" fill="#33bedc"/>
<rect x="840" y="870" width="20" height="20" fill="#52bddf"/>
<rect x="860" y="870" width="20" height="20" fill="#7eb3e1"/>
<rect x="880" y="870" width="20" height="20" fill="#97a2e3"/>
<rect x="900" y="870" width="20" height="20" fill="#9d8ce5"/>
<rect x="920" y="870" width="20" height="20" fill="#7b86e4"/>
<rect x="940" y="870" width="20" height="20" fill="#3192e2"/>
<rect x="960" y="870" width="20" height="20" fill="#0c9de0"/>
<rect x="980" y="870" width="20" height="20" fill="#0ca7de"/>
<rect x="1000" y="870" width="20" height="20" fill="#31a8de"/>
<rect x="1020" y="870" width="20" height="20" fill="#7ba2e0"/>
<rect x="1040" y="870" width="20" height="20" fill="#a292e0"/>
<rect x="1060" y="870" width="20" height="20" fill="#a678e0"/>
<rect x="1080" y="870" width="20" height="20" fill="#a454e2"/>
<rect x="1100" y="870" width="20" height="20" fill="#9c24e6"/>
<rect x="1120" y="870" width="20" height="20" fill="#940ce6"/>
<rect x="1140" y="870" width="20" height="20" fill="#8c0ce4"/>
<rect x="1160" y="870" width="20" height="20" fill="#9315e2"/>
<rect x="1180" y="870" width="20" height="20" fill="#a927e0"/>
<rect x="1200" y="870" width="20" height="20" fill="#ba24dd"/>
<rect x="1220" y="870" width="20" height="20" fill="#c60cd7"/>
<rect x="1240" y="870" width="20" height="20" fill="#c900d3"/>
<rect x="1260" y="870" width="20" height="20" fill="#c300d1"/>
<rect x="1280" y="870" width="20" height="20" fill="#c000d0"/>
<rect x="1300" y="870" width="20" height="20" fill="#c000d0"/>
<rect x="1320" y="870" width="20" height="20" fill="#c000d0"/>
<rect x="620" y="890" width="20" height="20" fill="#0456e0"/>
<rect x="640" y="890" width="20" height="20" fill="#0456e0"/>
<rect x="660" y="890" width="20" height="20" fill="#0456e0"/>
<rect x="680" y="890" width="20" height="20" fill="#0456e0"/>
<rect x="700" y="890" width="20" height="20" fill="#0456e0"/>
<rect x="720" y="890" width="20" height="20" fill="#0464e0"/>
<rect x="740" y="890" width="20" height="20" fill="#067ee0"/>
<rect x="760" y="890" width="20" height="20" fill="#0688df"/>
<rect x="780" y="890" width="20" height="20" fill="#0880dd"/>
<rect x="800" y="890" width="20" height="20" fill="#1382e0"/>
<rect x="820" y="890" width="20" height="20" fill="#2990e6"/>
<rect x="840" y="890" width="20" height="20" fill="#4e8fe9"/>
<rect x="860" y="890" width="20" height="20" fill="#8281e7"/>
<rect x="880" y="890" width="20" height="20" fill="#9d74e5"/>
<rect x="900" y="890" width="20" height="20" fill="#9f66e3"/>
<rect x="920" y="890" width="20" height="20" fill="#7962e2"/>
<rect x="940" y="890" width="20" height="20" fill="#2b66e0"/>
<rect x="960" y="890" width="20" height="20" fill="#0467e2"/>
<rect x="980" y="890" width="20" height="20" fill="#0465e8"/>
<rect x="1000" y="890" width="20" height="20" fill="#2b5ee8"/>
<rect x="1020" y="890" width="20" height="20" fill="#7950e2"/>
<rect x="1040" y="890" width="20" height="20" fill="#a640e0"/>
<rect x="1060" y="890" width="20" height="20" fill="#b22ee0"/>
<rect x="1080" y="890" width="20" height="20" fill="#b41ce2"/>
<rect x="1100" y="890" width="20" height="20" fill="#ac0ce6"/>
<rect x="1120" y="890" width="20" height="20" fill="#a404e8"/>
<rect x="1140" y="890" width="20" height="20" fill="#9c04e6"/>
<rect x="1160" y="890" width="20" height="20" fill="#a107e4"/>
<rect x="1180" y="890" width="20" height="20" fill="#b30de2"/>
<rect x="1200" y="890" width="20" height="20" fill="#be0cdf"/>
<rect x="1220" y="890" width="20" height="20" fill="#c204dd"/>
<rect x="1240" y="890" width="20" height="20" fill="#c300d9"/>
<rect x="1260" y="890" width="20" height="20" fill="#c100d3"/>
<rect x="1280" y="890" width="20" height="20" fill="#c000d0"/>
<rect x="1300" y="890" width="20" height="20" fill="#c000d0"/>
<rect x="1320" y="890" width="20" height="20" fill="#c000d0"/>
<rect x="620" y="910" width="20" height="20" fill="#0040e0"/>
<rect x="640" y="910" width="20" height="20" fill="#0040e0"/>
<rect x="660" y="910" width="20" height="20" fill="#0040e0"/>
<rect x="680" y="910" width="20" height="20" fill="#0040e0"/>
<rect x="700" y="910" width="20" height="20" fill="#0040e0"/>
<rect x="720" y="910" width="20" height="20" fill="#024ee0"/>
<rect x="740" y="910" width="20" height="20" fill="#066ae0"/>
<rect x="760" y="910" width="20" height="20" fill="#0672e0"/>
<rect x="780" y="910" width="20" height="20" fill="#0266e0"/>
<rect x="800" y="910" width="20" height="20" fill="#0c68e4"/>
<rect x="820" y="910" width="20" height="20" fill="#2478ec"/>
<rect x="840" y="910" width="20" height="20" fill="#4c78ee"/>
<rect x="860" y="910" width="20" height="20" fill="#8468ea"/>
<rect x="880" y="910" width="20" height="20" fill="#a05ce6"/>
<rect x="900" y="910" width="20" height="20" fill="#a054e2"/>
<rect x="920" y="910" width="20" height="20" fill="#7850e0"/>
<rect x="940" y="910" width="20" height="20" fill="#2850e0"/>
<rect x="960" y="910" width="20" height="20" fill="#004ce4"/>
<rect x="980" y="910" width="20" height="20" fill="#0044ec"/>
<rect x="1000" y="910" width="20" height="20" fill="#2838ec"/>
<rect x="1020" y="910" width="20" height="20" fill="#7828e4"/>
<rect x="1040" y="910" width="20" height="20" fill="#a818e0"/>
<rect x="1060" y="910" width="20" height="20" fill="#b808e0"/>
<rect x="1080" y="910" width="20" height="20" fill="#bc00e2"/>
<rect x="1100" y="910" width="20" height="20" fill="#b400e6"/>
<rect x="1120" y="910" width="20" height="20" fill="#ac00e8"/>
<rect x="1140" y="910" width="20" height="20" fill="#a400e8"/>
<rect x="1160" y="910" width="20" height="20" fill="#a800e6"/>
<rect x="1180" y="910" width="20" height="20" fill="#b800e2"/>
<rect x="1200" y="910" width="20" height="20" fill="#c000e0"/>
<rect x="1220" y="910" width="20" height="20" fill="#c000e0"/>
<rect x="1240" y="910" width="20" height="20" fill="#c000dc"/>
<rect x="1260" y="910" width="20" height="20" fill="#c000d4"/>
<rect x="1280" y="910" width="20" height="20" fill="#c000d0"/>
<rect x="1300" y="910" width="20" height="20" fill="#c000d0"/>
<rect x="1320" y="910" width="20" height="20" fill="#c000d0"/></g>
<g filter="url(#bp)"><polygon fill="#00d8c8" points="650,195 710,195 730,240 760,320 680,320 645,240"/>
<polygon fill="#1060d0" points="660,244 691,312 679,312 655,234"/>
<polygon fill="#b8eca8" points="681,206 705,207 719,224 725,254 751,307 723,307 699,244"/>
<polygon fill="#f0c090" points="712,212 722,228 728,262 752,308 740,308 718,260"/>
<polygon fill="#00dcc8" points="780,300 857,232 916,187 946,163 955,165 916,204 885,232 867,254 827,291 816,311 808,315"/>
<polygon fill="#a0a0f0" points="816,311 827,291 867,254 885,232 916,197 924,204 889,248 857,283 833,315"/>
<polygon fill="#ff10a0" points="849,299 887,250 926,204 954,177 960,191 936,234 887,283 857,307"/>
<polygon fill="#e0b0d8" points="857,307 887,283 936,234 960,191 990,224 990,264 966,287 916,295 867,311"/>
<polygon fill="#b0e8d0" points="870,300 920,290 975,280 972,290 920,298 868,308"/>
<polygon fill="#e000d0" points="822,343 857,307 916,295 966,287 990,262 990,300 936,310 877,330 837,350"/>
<polygon fill="#00c8e8" points="625,330 692,315 740,310 760,362 740,434 728,446 692,446 656,458 625,458"/>
<polygon fill="#10e0d0" points="625,335 740,312 830,318 760,345 700,340 650,355"/>
<polygon fill="#20ecb0" points="625,335 699,309 768,305 818,315 830,330 778,323 719,323 660,340"/>
<polygon fill="#0818d8" points="630,362 658,369 661,412 630,415"/>
<polygon fill="#10a8c0" points="620,415 661,412 668,463 646,499 620,482"/>
<polygon fill="#0088f0" points="661,412 692,391 740,386 745,434 733,453 692,458 668,463"/>
<polygon fill="#0000f0" points="644,494 668,465 716,448 735,456 764,477 769,506 754,542 728,554 692,545 656,521"/>
<polygon fill="#0838d0" points="620,477 644,494 656,521 692,545 656,549 628,518"/>
<polygon fill="#60d4e0" points="745,316 789,314 824,323 789,346 755,369 715,372"/>
<polygon fill="#a0b8e8" points="715,372 755,369 789,346 785,381 773,416 752,451 732,444 722,430"/>
<polygon fill="#eca4c4" points="785,381 824,330 836,346 840,369 836,397 854,430 871,444 878,462 859,481 813,481 778,485 755,451 773,416"/>
<polygon fill="#f03090" points="785,365 831,335 840,346 831,369 817,397 796,400 785,430 778,416"/>
<polygon fill="#c010e0" points="796,356 813,360 808,374 798,372"/>
<polygon fill="#d8b8dc" points="796,404 836,400 850,430 836,462 796,451"/>
<polygon fill="#f0a080" points="834,328 842,328 846,369 862,414 880,442 872,448 854,420 838,370"/>
<polygon fill="#a868f0" points="732,444 752,451 778,485 766,508 743,481 720,462"/>
<polygon fill="#0010f0" points="720,444 743,481 766,508 778,543 720,555"/>
<polygon fill="#e010c8" points="766,508 778,485 813,481 859,481 878,462 880,485 871,508 836,525 801,543 755,555 778,543"/>
<polygon fill="#e81080" points="768,540 800,518 840,500 862,494 848,514 806,540 778,552"/>
<polygon fill="#90c0ec" points="878,462 905,451 905,575 755,575 801,543 836,525 871,508 880,485"/>
<polygon fill="#40f0b0" points="720,307 789,307 824,315 840,328 830,330 789,318 720,318"/>
<polygon fill="#00d0d8" points="980,645 1014,608 1067,590 1114,587 1149,604 1190,611 1206,627 1160,636 1114,634 1067,642 1021,648 998,657"/>
<polygon fill="#40f0b0" points="1015,625 1067,590 1114,586 1144,596 1147,604 1114,601 1067,611 1021,630"/>
<polygon fill="#0090f0" points="980,645 1021,648 1067,642 1090,642 1067,657 1052,680 1029,688 1014,688 975,670"/>
<polygon fill="#0000e0" points="955,657 975,670 1014,688 1029,688 1052,680 1067,688 1067,715 955,715"/>
<polygon fill="#80b8ec" points="866,499 880,469 957,494 957,580 840,580 840,522"/>
<polygon fill="#30a8f0" points="937,527 1052,512 1083,535 1044,554 1014,580 937,580"/>
<polygon fill="#c080e0" points="903,580 937,530 937,580"/>
<polygon fill="#00b8f0" points="957,494 1044,492 1083,481 1140,466 1140,506 1106,509 1083,512 1052,512 1014,527 990,532 957,512"/>
<polygon fill="#00dcc8" points="874,445 934,459 967,454 1014,443 1075,431 1140,440 1140,466 1083,478 1044,491 1014,492 964,494 875,480"/>
<polygon fill="#60d8d8" points="880,452 934,462 960,465 960,512 880,505"/>
<polygon fill="#a8e0c0" points="935,462 950,470 958,510 948,505"/>
<polygon fill="#20f0a0" points="870,435 934,449 967,444 1014,433 1075,421 1140,428 1145,446 1106,438 1075,440 1014,451 967,461 934,465 878,451"/>
<polygon fill="#e03cc0" points="848,455 872,446 880,462 880,478 868,500 845,520 835,500"/>
<polygon fill="#0878e8" points="645,542 736,578 796,549 844,530 844,578 808,626 772,650 743,650 712,621 688,626 645,626"/>
<polygon fill="#10a0c0" points="645,542 688,554 676,614 645,614"/>
<polygon fill="#8098f0" points="812,548 905,532 895,600 875,621 844,643 815,650 822,604"/>
<polygon fill="#0000f0" points="645,626 712,621 743,650 772,650 796,674 808,710 832,746 856,770 851,810 796,810 724,751 676,698 645,650"/>
<polygon fill="#0000c8" points="676,698 724,751 796,789 856,794 851,815 796,815 712,746"/>
<polygon fill="#8020e8" points="796,650 844,643 880,650 868,698 880,734 856,770 832,746 808,710 796,674"/>
<polygon fill="#d020e0" points="880,621 914,602 914,698 892,734 868,698 880,650"/>
<polygon fill="#0000f0" points="914,602 922,602 922,810 856,810 861,770 892,734 914,698"/>
<polygon fill="#c838e0" points="890,590 914,604 914,696 900,710 900,739 890,734"/>
<polygon fill="#0010e8" points="890,734 900,739 914,753 926,782 928,842 890,842"/>
<polygon fill="#8010f0" points="900,710 927,708 943,662 960,669 974,734 974,818 928,842 926,782 914,753 900,739"/>
<polygon fill="#d000e0" points="928,652 960,669 974,734 974,818 938,842 926,782 943,734"/>
<polygon fill="#0000f8" points="914,604 943,619 928,650 927,708 914,696"/>
<polygon fill="#7048f0" points="943,619 1010,604 981,648 960,669 928,650"/>
<polygon fill="#0000d0" points="960,669 981,648 1015,693 1046,689 1063,758 1058,830 1034,842 974,818 974,734"/>
<polygon fill="#1008f0" points="1046,689 1087,705 1118,758 1111,806 1087,830 1058,830 1063,758"/>
<polygon fill="#0000e0" points="1024,842 1058,830 1087,830 1130,830 1130,854 1082,859"/>
<polygon fill="#6818f0" points="1095,660 1150,665 1147,700 1139,775 1151,834 1155,865 1105,865 1095,830 1118,758 1100,705"/>
<polygon fill="#d010d8" points="1145,680 1290,680 1290,721 1275,783 1244,841 1213,876 1192,900 1110,915 1110,865 1151,861 1139,775 1147,700"/>
<polygon fill="#f010c0" points="1271,680 1290,680 1287,731 1271,793 1238,845 1217,871 1209,876 1233,834 1262,773 1275,721"/>
<polygon fill="#d020d8" points="1345,740 1345,787 1306,824 1254,855 1221,869 1238,845 1275,803 1306,783 1326,762"/>
<polygon fill="#d078d8" points="1160,665 1250,650 1290,660 1285,700 1240,720 1190,705 1160,700"/>
<polygon fill="#c890e0" points="1180,684 1232,684 1225,700 1190,712"/>
<polygon fill="#50c8e8" points="1287,692 1316,694 1336,713 1345,742 1326,762 1295,779 1275,783 1281,731"/>
<polygon fill="#50f0b0" points="1285,688 1316,690 1330,705 1289,707"/>
<polygon fill="#5030f0" points="1254,814 1275,783 1306,783 1295,814 1264,834"/>
<polygon fill="#8000e8" points="1105,865 1161,865 1203,855 1217,871 1192,900 1180,920 1105,920"/>
<polygon fill="#0000c8" points="740,770 926,775 898,842 885,824 864,813 844,827 844,807 830,794 797,788 740,770"/>
<polygon fill="#3010f0" points="898,775 926,775 926,842 898,842"/>
<polygon fill="#0070d8" points="797,788 830,794 844,807 844,828 834,844 800,825 797,814"/>
<polygon fill="#00cce0" points="728,876 741,855 761,839 789,828 816,825 834,835 837,844 816,862 795,876 782,899 761,897 741,890"/>
<polygon fill="#30e0a0" points="725,876 738,853 759,836 789,824 800,822 789,832 761,843 745,857 734,876"/>
<polygon fill="#0040e0" points="722,880 741,890 761,897 782,899 780,906 747,900 727,892"/>
<polygon fill="#00c8e0" points="782,899 795,873 823,857 850,850 871,849 898,842 898,862 878,869 844,879 844,904 816,917 797,910 783,910"/>
<polygon fill="#30f0a0" points="782,897 795,870 823,853 850,846 866,845 850,857 823,865 802,879 786,898"/>
<polygon fill="#a0c8e0" points="841,879 878,869 898,862 926,865 926,884 871,890 844,904"/>
<polygon fill="#b050e0" points="844,904 871,890 926,884 926,935 850,935"/>
<polygon fill="#0010e0" points="778,910 797,910 816,917 844,904 850,935 809,935 780,925"/>
<polygon fill="#c020e0" points="927,800 974,800 974,820 946,843 927,843"/>
<polygon fill="#a0a0e8" points="927,843 946,843 940,866 927,889"/>
<polygon fill="#0000e0" points="974,800 1117,800 1126,846 1063,858 1027,841 974,820"/>
<polygon fill="#00c8e0" points="940,866 946,843 969,820 1019,838 1027,846 1019,849 1027,889 1010,899 994,913 958,902 956,912 927,913 927,889"/>
<polygon fill="#30e8c8" points="950,850 969,825 1015,840 1010,860 980,865"/>
<polygon fill="#0060e0" points="927,889 956,881 959,902 956,913 927,913"/>
<polygon fill="#0000e8" points="927,913 956,913 959,902 994,913 1010,915 1012,935 989,935 927,930"/>
<polygon fill="#5010d0" points="1063,858 1126,846 1163,867 1142,881 1093,871"/>
<polygon fill="#b0b0e8" points="1015,851 1043,849 1093,871 1142,881 1084,886 1027,889"/>
<polygon fill="#c000e0" points="1012,915 1027,889 1084,886 1142,881 1191,869 1225,869 1225,872 1191,902 1117,918 1019,935"/>
<polygon fill="#20e0c8" points="1040,425 1106,425 1131,443 1081,478 1040,492"/>
<polygon fill="#80d8d8" points="1071,455 1131,443 1184,461 1205,486 1164,482 1133,492 1081,480"/>
<polygon fill="#40a8f0" points="1040,492 1081,480 1112,498 1112,533 1061,543 1040,554"/>
<polygon fill="#90a0f0" points="1112,498 1133,492 1164,482 1205,486 1215,513 1184,513 1174,523 1143,529 1112,533"/>
<polygon fill="#b8a8e8" points="1205,486 1236,506 1256,533 1246,564 1211,554 1188,554 1184,513 1215,513"/>
<polygon fill="#e8a8c8" points="1236,506 1266,543 1290,605 1290,630 1256,605 1246,564 1256,533"/>
<polygon fill="#6070f0" points="1061,543 1112,533 1102,564 1061,548"/>
<polygon fill="#b050f0" points="1112,533 1174,521 1164,554 1122,585 1102,564"/>
<polygon fill="#6838f0" points="1040,554 1061,548 1122,568 1118,585 1065,589 1040,585"/>
<polygon fill="#30c0f0" points="1122,585 1164,554 1188,554 1184,574 1164,599 1147,585"/>
<polygon fill="#a8c8e0" points="1188,554 1211,554 1246,564 1256,605 1225,595 1194,589 1184,574"/>
<polygon fill="#40f0b0" points="1040,595 1081,587 1122,587 1153,599 1143,605 1102,601 1061,605 1040,609"/>
<polygon fill="#20d0e0" points="1040,609 1102,601 1143,605 1184,615 1164,636 1102,646 1040,660"/>
<polygon fill="#b0b8e8" points="1153,599 1194,589 1225,595 1246,615 1205,626 1164,636 1184,615"/>
<polygon fill="#a890f0" points="1071,646 1164,636 1205,626 1246,615 1290,626 1290,665 1071,665"/>
<polygon fill="#d858d8" points="1235,630 1260,622 1290,626 1290,665 1230,665"/>
<polygon fill="#20f0a8" points="1040,418 1106,418 1140,430 1135,440 1106,435 1040,437"/>
<polygon fill="#a8eeb0" points="1130,425 1168,438 1220,474 1252,506 1275,540 1268,548 1246,518 1215,487 1164,453 1130,440"/></g>
</g>
</svg>
<div id="title"><div class="t">Scene Solution</div>
<div class="dot" style="left:16px;background:#ee6a5f;border:1px solid #d9564b"></div>
<div class="dot" style="left:56px;background:#f5bf4f;border:1px solid #d6a23b"></div>
<div class="dot" style="left:96px;background:#d6d6d6;border:1px solid #b2b2b2"></div>
</div>
</div>
</body></html>
